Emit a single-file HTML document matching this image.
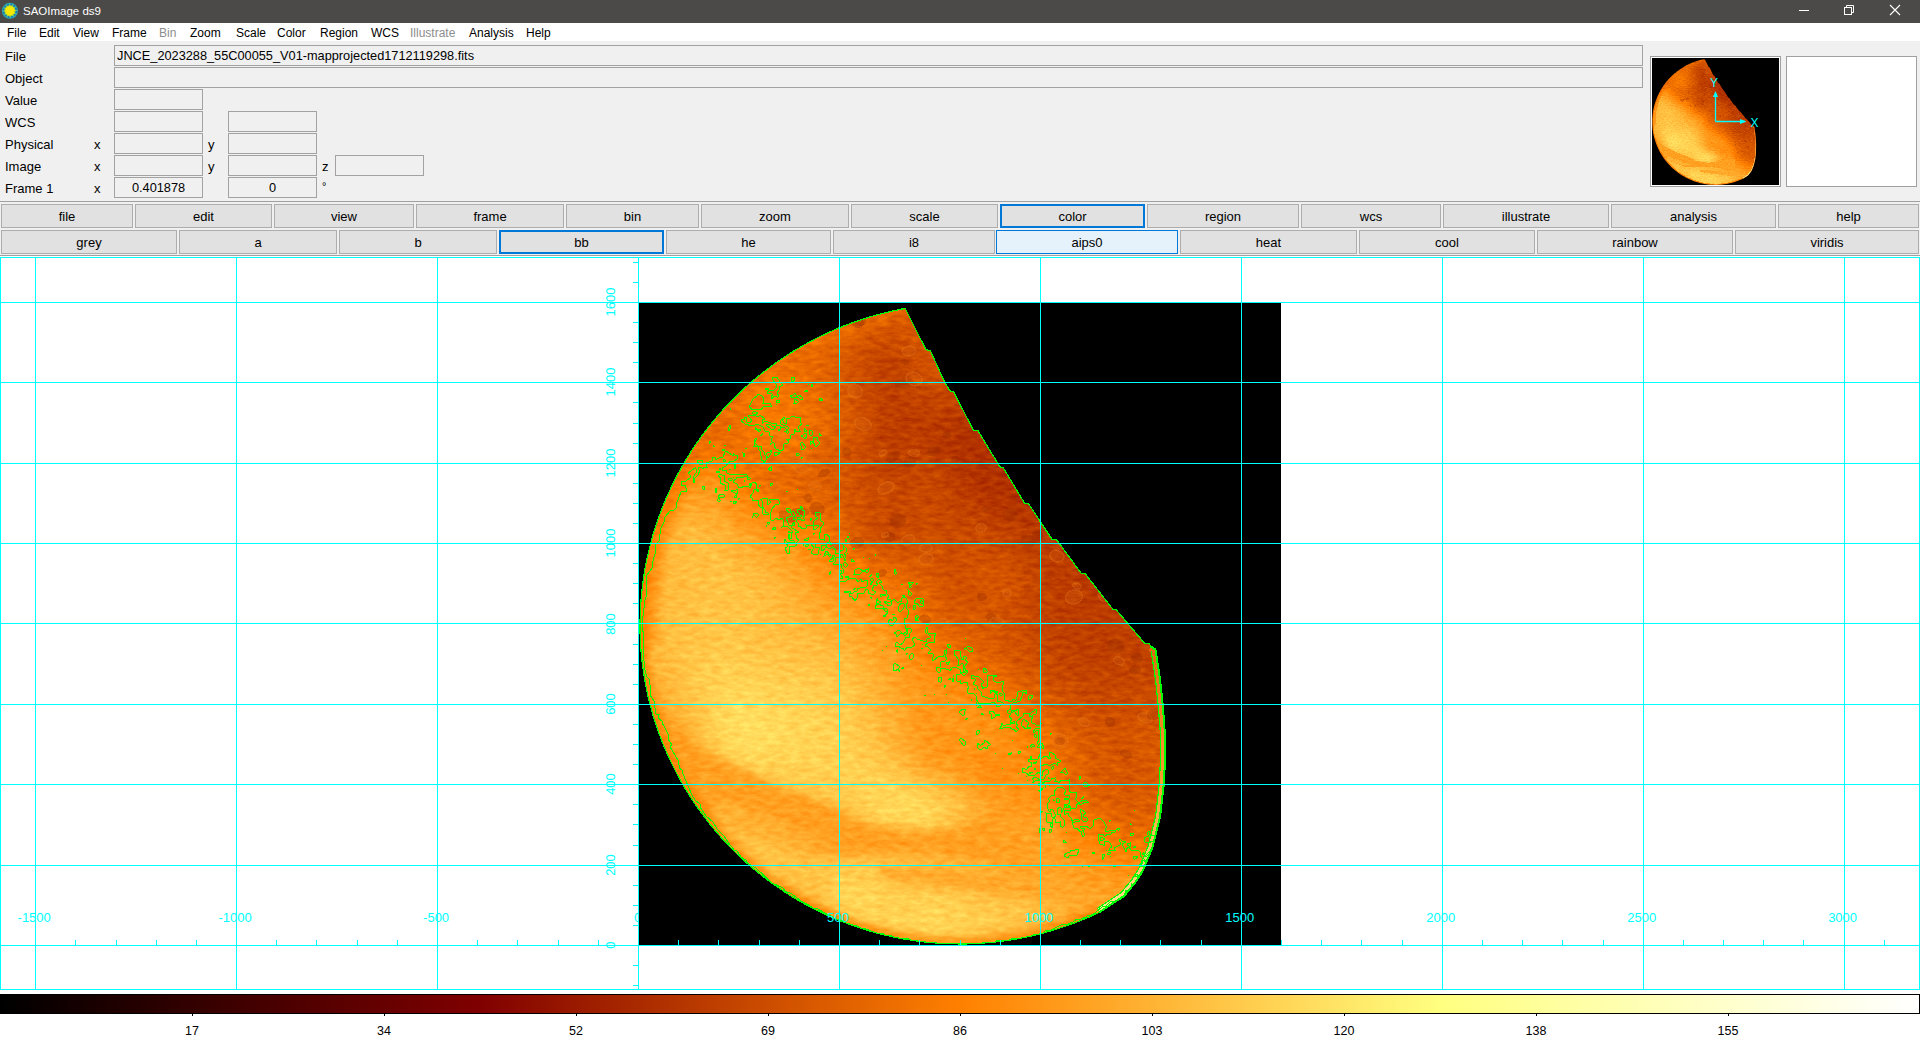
<!DOCTYPE html><html><head><meta charset="utf-8"><style>
*{margin:0;padding:0;box-sizing:border-box}
html,body{width:1920px;height:1040px;overflow:hidden;background:#f0f0f0;font-family:"Liberation Sans",sans-serif;color:#000}
.a{position:absolute;white-space:nowrap}
.mi{position:absolute;top:26px;font-size:12px;line-height:14px}
.lbl{position:absolute;font-size:13px;line-height:16px}
.box{position:absolute;border:1px solid #a2a2a2;background:#f0f0f0;font-size:12.75px;line-height:19px}
.btn{position:absolute;border:1px solid #adadad;background:#e1e1e1;font-size:13px;text-align:center;line-height:22px;padding-top:1px}
.ax{position:absolute;color:#00ffff;font-size:13px;line-height:12px}
.cb{position:absolute;font-size:12.5px;line-height:12px}
</style></head><body>

<div class="a" style="left:0;top:0;width:1920px;height:23px;background:#4b4a48"></div>
<div class="a" style="left:0;top:23px;width:1920px;height:18px;background:#ffffff"></div>
<svg class="a" style="left:0;top:0" width="22" height="22"><circle cx="9.9" cy="10.8" r="8" fill="#30b0b0"/><circle cx="9.9" cy="10.8" r="6.2" fill="#a8d830"/><circle cx="9.9" cy="10.8" r="4.6" fill="#f8e800"/><circle cx="16.1" cy="12.1" r="1.1" fill="#1878c0"/><circle cx="14.6" cy="15.0" r="1.1" fill="#1878c0"/><circle cx="11.9" cy="16.8" r="1.1" fill="#1878c0"/><circle cx="8.6" cy="17.0" r="1.1" fill="#1878c0"/><circle cx="5.7" cy="15.5" r="1.1" fill="#1878c0"/><circle cx="3.9" cy="12.8" r="1.1" fill="#1878c0"/><circle cx="3.7" cy="9.5" r="1.1" fill="#1878c0"/><circle cx="5.2" cy="6.6" r="1.1" fill="#1878c0"/><circle cx="7.9" cy="4.8" r="1.1" fill="#1878c0"/><circle cx="11.2" cy="4.6" r="1.1" fill="#1878c0"/><circle cx="14.1" cy="6.1" r="1.1" fill="#1878c0"/><circle cx="15.9" cy="8.8" r="1.1" fill="#1878c0"/></svg>
<div class="a" style="left:23px;top:4px;font-size:11.5px;line-height:14px;color:#ffffff">SAOImage ds9</div>
<svg class="a" style="left:1790px;top:0" width="130" height="22"><line x1="9" y1="10.5" x2="19" y2="10.5" stroke="#fff" stroke-width="1"/><rect x="54.5" y="7.5" width="7" height="7" fill="none" stroke="#fff" stroke-width="1"/><path d="M56.5 7.5 V5.5 H63.5 V12.5 H61.5" fill="none" stroke="#fff" stroke-width="1"/><path d="M100 5 L110 15 M110 5 L100 15" stroke="#fff" stroke-width="1.1"/></svg>
<div class="mi" style="left:7px;color:#000">File</div>
<div class="mi" style="left:39px;color:#000">Edit</div>
<div class="mi" style="left:73px;color:#000">View</div>
<div class="mi" style="left:112px;color:#000">Frame</div>
<div class="mi" style="left:159px;color:#8d8d8d">Bin</div>
<div class="mi" style="left:190px;color:#000">Zoom</div>
<div class="mi" style="left:236px;color:#000">Scale</div>
<div class="mi" style="left:277px;color:#000">Color</div>
<div class="mi" style="left:320px;color:#000">Region</div>
<div class="mi" style="left:371px;color:#000">WCS</div>
<div class="mi" style="left:410px;color:#8d8d8d">Illustrate</div>
<div class="mi" style="left:469px;color:#000">Analysis</div>
<div class="mi" style="left:526px;color:#000">Help</div>
<div class="lbl" style="left:5px;top:48.5px">File</div>
<div class="lbl" style="left:5px;top:70.5px">Object</div>
<div class="lbl" style="left:5px;top:92.5px">Value</div>
<div class="lbl" style="left:5px;top:114.5px">WCS</div>
<div class="lbl" style="left:5px;top:136.5px">Physical</div>
<div class="lbl" style="left:5px;top:158.5px">Image</div>
<div class="lbl" style="left:5px;top:180.5px">Frame 1</div>
<div class="box" style="left:114px;top:45px;width:1529px;height:21px;padding-left:2px">JNCE_2023288_55C00055_V01-mapprojected1712119298.fits</div>
<div class="box" style="left:114px;top:67px;width:1529px;height:21px"></div>
<div class="box" style="left:114px;top:89px;width:89px;height:21px"></div>
<div class="box" style="left:114px;top:111px;width:89px;height:21px"></div>
<div class="box" style="left:228px;top:111px;width:89px;height:21px"></div>
<div class="box" style="left:114px;top:133px;width:89px;height:21px"></div>
<div class="box" style="left:228px;top:133px;width:89px;height:21px"></div>
<div class="box" style="left:114px;top:155px;width:89px;height:21px"></div>
<div class="box" style="left:228px;top:155px;width:89px;height:21px"></div>
<div class="box" style="left:114px;top:177px;width:89px;height:21px"></div>
<div class="box" style="left:228px;top:177px;width:89px;height:21px"></div>
<div class="box" style="left:335px;top:155px;width:89px;height:21px"></div>
<div class="a" style="left:114px;top:178px;width:89px;font-size:12.75px;line-height:19px;text-align:center">0.401878</div>
<div class="a" style="left:228px;top:178px;width:89px;font-size:12.75px;line-height:19px;text-align:center">0</div>
<div class="lbl" style="left:94px;top:136.5px">x</div>
<div class="lbl" style="left:208px;top:136.5px">y</div>
<div class="lbl" style="left:94px;top:158.5px">x</div>
<div class="lbl" style="left:208px;top:158.5px">y</div>
<div class="lbl" style="left:322px;top:158.5px">z</div>
<div class="lbl" style="left:94px;top:180.5px">x</div>
<div class="lbl" style="left:322px;top:178px;font-size:11px">&#176;</div>
<div class="a" style="left:1650px;top:56px;width:131px;height:131px;border:1px solid #a0a0a0;background:#fff;padding:1px"><div style="width:127px;height:127px;background:#000"></div></div>
<div class="a" style="left:1786px;top:56px;width:131px;height:131px;border:1px solid #a0a0a0;background:#fff"></div>
<div class="a" style="left:0;top:201px;width:1920px;height:1px;background:#a0a0a0"></div>
<div class="a" style="left:0;top:255px;width:1920px;height:1px;background:#a0a0a0"></div>
<div class="btn" style="left:1px;top:204px;width:132px;height:24px;">file</div>
<div class="btn" style="left:135px;top:204px;width:137px;height:24px;">edit</div>
<div class="btn" style="left:274px;top:204px;width:140px;height:24px;">view</div>
<div class="btn" style="left:416px;top:204px;width:148px;height:24px;">frame</div>
<div class="btn" style="left:566px;top:204px;width:133px;height:24px;">bin</div>
<div class="btn" style="left:701px;top:204px;width:148px;height:24px;">zoom</div>
<div class="btn" style="left:851px;top:204px;width:147px;height:24px;">scale</div>
<div class="btn" style="left:1000px;top:204px;width:145px;height:24px;border:2px solid #0078d7;line-height:20px;">color</div>
<div class="btn" style="left:1147px;top:204px;width:152px;height:24px;">region</div>
<div class="btn" style="left:1301px;top:204px;width:140px;height:24px;">wcs</div>
<div class="btn" style="left:1443px;top:204px;width:166px;height:24px;">illustrate</div>
<div class="btn" style="left:1611px;top:204px;width:165px;height:24px;">analysis</div>
<div class="btn" style="left:1778px;top:204px;width:141px;height:24px;">help</div>
<div class="btn" style="left:1px;top:230px;width:176px;height:24px;">grey</div>
<div class="btn" style="left:179px;top:230px;width:158px;height:24px;">a</div>
<div class="btn" style="left:339px;top:230px;width:158px;height:24px;">b</div>
<div class="btn" style="left:499px;top:230px;width:165px;height:24px;border:2px solid #0078d7;line-height:20px;">bb</div>
<div class="btn" style="left:666px;top:230px;width:165px;height:24px;">he</div>
<div class="btn" style="left:833px;top:230px;width:162px;height:24px;">i8</div>
<div class="btn" style="left:996px;top:230px;width:182px;height:24px;border:1px solid #0078d7;background:#e5f1fb;">aips0</div>
<div class="btn" style="left:1180px;top:230px;width:177px;height:24px;">heat</div>
<div class="btn" style="left:1359px;top:230px;width:176px;height:24px;">cool</div>
<div class="btn" style="left:1537px;top:230px;width:196px;height:24px;">rainbow</div>
<div class="btn" style="left:1735px;top:230px;width:184px;height:24px;">viridis</div>
<div class="a" style="left:0;top:256px;width:1920px;height:784px;background:#fff"></div>
<svg class="a" style="left:0;top:0" width="1920" height="1040" shape-rendering="crispEdges">
<rect x="639" y="303" width="642" height="642" fill="#000"/>
<defs>
<clipPath id="pclip"><path d="M1099.6 912.2 L1091.3 916.1 L1082.9 919.7 L1074.4 923.0 L1065.8 926.1 L1057.1 929.0 L1048.4 931.6 L1039.6 934.0 L1030.7 936.1 L1021.7 938.0 L1012.7 939.6 L1003.7 941.0 L994.6 942.1 L985.5 942.9 L976.4 943.5 L967.3 943.9 L958.1 943.9 L949.0 943.7 L939.9 943.3 L930.8 942.6 L921.7 941.6 L912.7 940.4 L903.7 939.0 L894.7 937.2 L885.8 935.3 L876.9 933.0 L868.2 930.6 L859.5 927.8 L850.8 924.9 L842.3 921.6 L833.9 918.2 L825.6 914.5 L817.3 910.6 L809.2 906.4 L801.2 902.0 L793.4 897.4 L785.7 892.6 L778.1 887.5 L770.7 882.3 L763.4 876.8 L756.3 871.1 L749.3 865.2 L742.6 859.2 L736.0 852.9 L729.6 846.5 L723.3 839.8 L717.3 833.0 L711.5 826.1 L705.8 818.9 L700.4 811.6 L695.2 804.2 L690.2 796.6 L685.4 788.9 L680.8 781.0 L676.5 773.0 L672.4 764.9 L668.5 756.7 L664.8 748.4 L661.4 739.9 L658.3 731.4 L655.4 722.8 L652.7 714.1 L650.3 705.3 L648.1 696.5 L646.2 687.6 L644.6 678.7 L643.2 669.7 L642.0 660.7 L641.1 651.6 L640.5 642.5 L640.1 633.5 L640.0 624.4 L640.2 615.3 L640.6 606.2 L641.3 597.1 L642.2 588.0 L643.4 579.0 L644.8 570.0 L646.5 561.0 L648.5 552.1 L650.7 543.3 L653.1 534.5 L655.8 525.8 L658.8 517.2 L662.0 508.7 L665.4 500.2 L669.1 491.9 L673.0 483.6 L677.1 475.5 L681.5 467.5 L686.1 459.6 L690.9 451.8 L696.0 444.2 L701.2 436.8 L706.7 429.4 L712.4 422.3 L718.2 415.3 L724.3 408.4 L730.6 401.8 L737.0 395.3 L743.6 389.0 L750.4 382.9 L757.4 377.0 L764.5 371.3 L771.8 365.8 L779.3 360.5 L786.9 355.4 L794.6 350.5 L802.5 345.9 L810.5 341.4 L818.6 337.2 L826.9 333.3 L835.2 329.5 L843.7 326.0 L852.2 322.8 L860.8 319.8 L869.6 317.0 L878.3 314.5 L887.2 312.2 L896.1 310.2 L905.1 308.4 L905.0 308.0 L926.0 349.8 L930.3 350.5 L944.7 382.3 L950.5 391.6 L953.4 391.6 L973.6 430.6 L977.9 430.6 L1000.0 467.0 L1003.0 467.4 L1024.7 503.5 L1028.3 503.5 L1052.2 539.6 L1056.5 539.6 L1081.5 573.7 L1085.2 573.7 L1113.3 609.8 L1116.2 609.8 L1145.0 643.7 L1149.4 643.7 L1150.8 646.6 L1155.5 649.6 L1160.0 678.8 L1162.8 706.0 L1165.4 740.0 L1165.0 760.0 L1163.8 784.0 L1160.0 817.0 L1152.3 847.7 L1142.7 870.8 L1135.0 883.0 L1124.0 896.0 L1099.6 912.2 Z"/></clipPath>
<filter id="pf" x="600" y="280" width="600" height="700" filterUnits="userSpaceOnUse" color-interpolation-filters="sRGB"><feGaussianBlur in="SourceGraphic" stdDeviation="4" result="base"/><feTurbulence type="fractalNoise" baseFrequency="0.09 0.22" numOctaves="3" seed="7" result="nz"/><feColorMatrix in="nz" type="matrix" values="1 0 0 0 0  1 0 0 0 0  1 0 0 0 0  0 0 0 0 1" result="gn"/><feComposite in="base" in2="gn" operator="arithmetic" k1="0" k2="1" k3="0.10" k4="-0.05" result="sum"/><feComponentTransfer in="sum"><feFuncR type="table" tableValues="0 1 1"/><feFuncG type="table" tableValues="0 0 0.5 1 1"/><feFuncB type="table" tableValues="0 0 1"/><feFuncA type="identity"/></feComponentTransfer></filter>
<linearGradient id="pg0" gradientUnits="userSpaceOnUse" x1="630" y1="0" x2="1190" y2="0"><stop offset="0" stop-color="#767676"/><stop offset="0.0357" stop-color="#767676"/><stop offset="0.0714" stop-color="#777777"/><stop offset="0.107" stop-color="#787878"/><stop offset="0.143" stop-color="#797979"/><stop offset="0.179" stop-color="#7a7a7a"/><stop offset="0.214" stop-color="#7b7b7b"/><stop offset="0.25" stop-color="#7b7b7b"/><stop offset="0.286" stop-color="#7a7a7a"/><stop offset="0.321" stop-color="#7a7a7a"/><stop offset="0.357" stop-color="#787878"/><stop offset="0.393" stop-color="#767676"/><stop offset="0.429" stop-color="#737373"/><stop offset="0.464" stop-color="#707070"/><stop offset="0.5" stop-color="#707070"/><stop offset="0.536" stop-color="#707070"/><stop offset="0.571" stop-color="#707070"/><stop offset="0.607" stop-color="#717171"/><stop offset="0.643" stop-color="#717171"/><stop offset="0.679" stop-color="#717171"/><stop offset="0.714" stop-color="#717171"/><stop offset="0.75" stop-color="#717171"/><stop offset="0.786" stop-color="#717171"/><stop offset="0.821" stop-color="#717171"/><stop offset="0.857" stop-color="#717171"/><stop offset="0.893" stop-color="#717171"/><stop offset="0.929" stop-color="#717171"/><stop offset="0.964" stop-color="#727272"/><stop offset="1" stop-color="#727272"/></linearGradient>
<linearGradient id="pg1" gradientUnits="userSpaceOnUse" x1="630" y1="0" x2="1190" y2="0"><stop offset="0" stop-color="#757575"/><stop offset="0.0357" stop-color="#767676"/><stop offset="0.0714" stop-color="#767676"/><stop offset="0.107" stop-color="#777777"/><stop offset="0.143" stop-color="#787878"/><stop offset="0.179" stop-color="#797979"/><stop offset="0.214" stop-color="#7a7a7a"/><stop offset="0.25" stop-color="#7a7a7a"/><stop offset="0.286" stop-color="#7a7a7a"/><stop offset="0.321" stop-color="#797979"/><stop offset="0.357" stop-color="#787878"/><stop offset="0.393" stop-color="#757575"/><stop offset="0.429" stop-color="#727272"/><stop offset="0.464" stop-color="#6f6f6f"/><stop offset="0.5" stop-color="#6e6e6e"/><stop offset="0.536" stop-color="#6f6f6f"/><stop offset="0.571" stop-color="#6f6f6f"/><stop offset="0.607" stop-color="#707070"/><stop offset="0.643" stop-color="#707070"/><stop offset="0.679" stop-color="#707070"/><stop offset="0.714" stop-color="#707070"/><stop offset="0.75" stop-color="#707070"/><stop offset="0.786" stop-color="#707070"/><stop offset="0.821" stop-color="#707070"/><stop offset="0.857" stop-color="#707070"/><stop offset="0.893" stop-color="#707070"/><stop offset="0.929" stop-color="#717171"/><stop offset="0.964" stop-color="#717171"/><stop offset="1" stop-color="#717171"/></linearGradient>
<linearGradient id="pg2" gradientUnits="userSpaceOnUse" x1="630" y1="0" x2="1190" y2="0"><stop offset="0" stop-color="#757575"/><stop offset="0.0357" stop-color="#757575"/><stop offset="0.0714" stop-color="#757575"/><stop offset="0.107" stop-color="#767676"/><stop offset="0.143" stop-color="#787878"/><stop offset="0.179" stop-color="#797979"/><stop offset="0.214" stop-color="#797979"/><stop offset="0.25" stop-color="#797979"/><stop offset="0.286" stop-color="#797979"/><stop offset="0.321" stop-color="#787878"/><stop offset="0.357" stop-color="#777777"/><stop offset="0.393" stop-color="#747474"/><stop offset="0.429" stop-color="#707070"/><stop offset="0.464" stop-color="#6d6d6d"/><stop offset="0.5" stop-color="#6c6c6c"/><stop offset="0.536" stop-color="#6d6d6d"/><stop offset="0.571" stop-color="#6e6e6e"/><stop offset="0.607" stop-color="#6f6f6f"/><stop offset="0.643" stop-color="#6f6f6f"/><stop offset="0.679" stop-color="#6f6f6f"/><stop offset="0.714" stop-color="#6f6f6f"/><stop offset="0.75" stop-color="#6f6f6f"/><stop offset="0.786" stop-color="#6f6f6f"/><stop offset="0.821" stop-color="#6f6f6f"/><stop offset="0.857" stop-color="#6f6f6f"/><stop offset="0.893" stop-color="#6f6f6f"/><stop offset="0.929" stop-color="#707070"/><stop offset="0.964" stop-color="#707070"/><stop offset="1" stop-color="#707070"/></linearGradient>
<linearGradient id="pg3" gradientUnits="userSpaceOnUse" x1="630" y1="0" x2="1190" y2="0"><stop offset="0" stop-color="#747474"/><stop offset="0.0357" stop-color="#747474"/><stop offset="0.0714" stop-color="#757575"/><stop offset="0.107" stop-color="#767676"/><stop offset="0.143" stop-color="#777777"/><stop offset="0.179" stop-color="#787878"/><stop offset="0.214" stop-color="#797979"/><stop offset="0.25" stop-color="#797979"/><stop offset="0.286" stop-color="#787878"/><stop offset="0.321" stop-color="#777777"/><stop offset="0.357" stop-color="#767676"/><stop offset="0.393" stop-color="#737373"/><stop offset="0.429" stop-color="#6d6d6d"/><stop offset="0.464" stop-color="#6a6a6a"/><stop offset="0.5" stop-color="#6a6a6a"/><stop offset="0.536" stop-color="#6c6c6c"/><stop offset="0.571" stop-color="#6d6d6d"/><stop offset="0.607" stop-color="#6e6e6e"/><stop offset="0.643" stop-color="#6e6e6e"/><stop offset="0.679" stop-color="#6e6e6e"/><stop offset="0.714" stop-color="#6e6e6e"/><stop offset="0.75" stop-color="#6e6e6e"/><stop offset="0.786" stop-color="#6e6e6e"/><stop offset="0.821" stop-color="#6e6e6e"/><stop offset="0.857" stop-color="#6e6e6e"/><stop offset="0.893" stop-color="#6f6f6f"/><stop offset="0.929" stop-color="#6f6f6f"/><stop offset="0.964" stop-color="#6f6f6f"/><stop offset="1" stop-color="#707070"/></linearGradient>
<linearGradient id="pg4" gradientUnits="userSpaceOnUse" x1="630" y1="0" x2="1190" y2="0"><stop offset="0" stop-color="#747474"/><stop offset="0.0357" stop-color="#747474"/><stop offset="0.0714" stop-color="#747474"/><stop offset="0.107" stop-color="#757575"/><stop offset="0.143" stop-color="#767676"/><stop offset="0.179" stop-color="#787878"/><stop offset="0.214" stop-color="#797979"/><stop offset="0.25" stop-color="#787878"/><stop offset="0.286" stop-color="#777777"/><stop offset="0.321" stop-color="#767676"/><stop offset="0.357" stop-color="#747474"/><stop offset="0.393" stop-color="#707070"/><stop offset="0.429" stop-color="#6a6a6a"/><stop offset="0.464" stop-color="#676767"/><stop offset="0.5" stop-color="#686868"/><stop offset="0.536" stop-color="#6b6b6b"/><stop offset="0.571" stop-color="#6c6c6c"/><stop offset="0.607" stop-color="#6d6d6d"/><stop offset="0.643" stop-color="#6d6d6d"/><stop offset="0.679" stop-color="#6d6d6d"/><stop offset="0.714" stop-color="#6d6d6d"/><stop offset="0.75" stop-color="#6d6d6d"/><stop offset="0.786" stop-color="#6d6d6d"/><stop offset="0.821" stop-color="#6d6d6d"/><stop offset="0.857" stop-color="#6d6d6d"/><stop offset="0.893" stop-color="#6e6e6e"/><stop offset="0.929" stop-color="#6e6e6e"/><stop offset="0.964" stop-color="#6e6e6e"/><stop offset="1" stop-color="#6f6f6f"/></linearGradient>
<linearGradient id="pg5" gradientUnits="userSpaceOnUse" x1="630" y1="0" x2="1190" y2="0"><stop offset="0" stop-color="#747474"/><stop offset="0.0357" stop-color="#737373"/><stop offset="0.0714" stop-color="#737373"/><stop offset="0.107" stop-color="#747474"/><stop offset="0.143" stop-color="#767676"/><stop offset="0.179" stop-color="#777777"/><stop offset="0.214" stop-color="#787878"/><stop offset="0.25" stop-color="#787878"/><stop offset="0.286" stop-color="#777777"/><stop offset="0.321" stop-color="#757575"/><stop offset="0.357" stop-color="#737373"/><stop offset="0.393" stop-color="#6d6d6d"/><stop offset="0.429" stop-color="#666666"/><stop offset="0.464" stop-color="#646464"/><stop offset="0.5" stop-color="#666666"/><stop offset="0.536" stop-color="#6a6a6a"/><stop offset="0.571" stop-color="#6b6b6b"/><stop offset="0.607" stop-color="#6b6b6b"/><stop offset="0.643" stop-color="#6b6b6b"/><stop offset="0.679" stop-color="#6b6b6b"/><stop offset="0.714" stop-color="#6b6b6b"/><stop offset="0.75" stop-color="#6b6b6b"/><stop offset="0.786" stop-color="#6b6b6b"/><stop offset="0.821" stop-color="#6c6c6c"/><stop offset="0.857" stop-color="#6c6c6c"/><stop offset="0.893" stop-color="#6d6d6d"/><stop offset="0.929" stop-color="#6d6d6d"/><stop offset="0.964" stop-color="#6e6e6e"/><stop offset="1" stop-color="#6e6e6e"/></linearGradient>
<linearGradient id="pg6" gradientUnits="userSpaceOnUse" x1="630" y1="0" x2="1190" y2="0"><stop offset="0" stop-color="#747474"/><stop offset="0.0357" stop-color="#737373"/><stop offset="0.0714" stop-color="#737373"/><stop offset="0.107" stop-color="#737373"/><stop offset="0.143" stop-color="#757575"/><stop offset="0.179" stop-color="#777777"/><stop offset="0.214" stop-color="#787878"/><stop offset="0.25" stop-color="#787878"/><stop offset="0.286" stop-color="#777777"/><stop offset="0.321" stop-color="#747474"/><stop offset="0.357" stop-color="#717171"/><stop offset="0.393" stop-color="#6b6b6b"/><stop offset="0.429" stop-color="#646464"/><stop offset="0.464" stop-color="#616161"/><stop offset="0.5" stop-color="#656565"/><stop offset="0.536" stop-color="#696969"/><stop offset="0.571" stop-color="#6a6a6a"/><stop offset="0.607" stop-color="#6a6a6a"/><stop offset="0.643" stop-color="#6a6a6a"/><stop offset="0.679" stop-color="#6a6a6a"/><stop offset="0.714" stop-color="#6a6a6a"/><stop offset="0.75" stop-color="#6a6a6a"/><stop offset="0.786" stop-color="#6a6a6a"/><stop offset="0.821" stop-color="#6b6b6b"/><stop offset="0.857" stop-color="#6b6b6b"/><stop offset="0.893" stop-color="#6c6c6c"/><stop offset="0.929" stop-color="#6c6c6c"/><stop offset="0.964" stop-color="#6d6d6d"/><stop offset="1" stop-color="#6d6d6d"/></linearGradient>
<linearGradient id="pg7" gradientUnits="userSpaceOnUse" x1="630" y1="0" x2="1190" y2="0"><stop offset="0" stop-color="#737373"/><stop offset="0.0357" stop-color="#727272"/><stop offset="0.0714" stop-color="#727272"/><stop offset="0.107" stop-color="#737373"/><stop offset="0.143" stop-color="#757575"/><stop offset="0.179" stop-color="#777777"/><stop offset="0.214" stop-color="#797979"/><stop offset="0.25" stop-color="#797979"/><stop offset="0.286" stop-color="#777777"/><stop offset="0.321" stop-color="#747474"/><stop offset="0.357" stop-color="#717171"/><stop offset="0.393" stop-color="#6a6a6a"/><stop offset="0.429" stop-color="#636363"/><stop offset="0.464" stop-color="#606060"/><stop offset="0.5" stop-color="#646464"/><stop offset="0.536" stop-color="#686868"/><stop offset="0.571" stop-color="#686868"/><stop offset="0.607" stop-color="#686868"/><stop offset="0.643" stop-color="#686868"/><stop offset="0.679" stop-color="#686868"/><stop offset="0.714" stop-color="#686868"/><stop offset="0.75" stop-color="#686868"/><stop offset="0.786" stop-color="#696969"/><stop offset="0.821" stop-color="#6a6a6a"/><stop offset="0.857" stop-color="#6a6a6a"/><stop offset="0.893" stop-color="#6b6b6b"/><stop offset="0.929" stop-color="#6c6c6c"/><stop offset="0.964" stop-color="#6c6c6c"/><stop offset="1" stop-color="#6d6d6d"/></linearGradient>
<linearGradient id="pg8" gradientUnits="userSpaceOnUse" x1="630" y1="0" x2="1190" y2="0"><stop offset="0" stop-color="#747474"/><stop offset="0.0357" stop-color="#727272"/><stop offset="0.0714" stop-color="#717171"/><stop offset="0.107" stop-color="#727272"/><stop offset="0.143" stop-color="#747474"/><stop offset="0.179" stop-color="#777777"/><stop offset="0.214" stop-color="#797979"/><stop offset="0.25" stop-color="#7a7a7a"/><stop offset="0.286" stop-color="#787878"/><stop offset="0.321" stop-color="#757575"/><stop offset="0.357" stop-color="#717171"/><stop offset="0.393" stop-color="#6a6a6a"/><stop offset="0.429" stop-color="#636363"/><stop offset="0.464" stop-color="#606060"/><stop offset="0.5" stop-color="#636363"/><stop offset="0.536" stop-color="#676767"/><stop offset="0.571" stop-color="#676767"/><stop offset="0.607" stop-color="#666666"/><stop offset="0.643" stop-color="#666666"/><stop offset="0.679" stop-color="#666666"/><stop offset="0.714" stop-color="#666666"/><stop offset="0.75" stop-color="#676767"/><stop offset="0.786" stop-color="#686868"/><stop offset="0.821" stop-color="#686868"/><stop offset="0.857" stop-color="#696969"/><stop offset="0.893" stop-color="#6a6a6a"/><stop offset="0.929" stop-color="#6b6b6b"/><stop offset="0.964" stop-color="#6b6b6b"/><stop offset="1" stop-color="#6c6c6c"/></linearGradient>
<linearGradient id="pg9" gradientUnits="userSpaceOnUse" x1="630" y1="0" x2="1190" y2="0"><stop offset="0" stop-color="#747474"/><stop offset="0.0357" stop-color="#727272"/><stop offset="0.0714" stop-color="#717171"/><stop offset="0.107" stop-color="#717171"/><stop offset="0.143" stop-color="#737373"/><stop offset="0.179" stop-color="#777777"/><stop offset="0.214" stop-color="#7a7a7a"/><stop offset="0.25" stop-color="#7b7b7b"/><stop offset="0.286" stop-color="#797979"/><stop offset="0.321" stop-color="#767676"/><stop offset="0.357" stop-color="#717171"/><stop offset="0.393" stop-color="#6a6a6a"/><stop offset="0.429" stop-color="#636363"/><stop offset="0.464" stop-color="#5f5f5f"/><stop offset="0.5" stop-color="#626262"/><stop offset="0.536" stop-color="#646464"/><stop offset="0.571" stop-color="#646464"/><stop offset="0.607" stop-color="#646464"/><stop offset="0.643" stop-color="#646464"/><stop offset="0.679" stop-color="#646464"/><stop offset="0.714" stop-color="#646464"/><stop offset="0.75" stop-color="#656565"/><stop offset="0.786" stop-color="#666666"/><stop offset="0.821" stop-color="#676767"/><stop offset="0.857" stop-color="#686868"/><stop offset="0.893" stop-color="#696969"/><stop offset="0.929" stop-color="#6a6a6a"/><stop offset="0.964" stop-color="#6a6a6a"/><stop offset="1" stop-color="#6b6b6b"/></linearGradient>
<linearGradient id="pg10" gradientUnits="userSpaceOnUse" x1="630" y1="0" x2="1190" y2="0"><stop offset="0" stop-color="#757575"/><stop offset="0.0357" stop-color="#727272"/><stop offset="0.0714" stop-color="#717171"/><stop offset="0.107" stop-color="#717171"/><stop offset="0.143" stop-color="#737373"/><stop offset="0.179" stop-color="#777777"/><stop offset="0.214" stop-color="#7a7a7a"/><stop offset="0.25" stop-color="#7c7c7c"/><stop offset="0.286" stop-color="#7a7a7a"/><stop offset="0.321" stop-color="#777777"/><stop offset="0.357" stop-color="#727272"/><stop offset="0.393" stop-color="#6b6b6b"/><stop offset="0.429" stop-color="#646464"/><stop offset="0.464" stop-color="#5f5f5f"/><stop offset="0.5" stop-color="#606060"/><stop offset="0.536" stop-color="#626262"/><stop offset="0.571" stop-color="#626262"/><stop offset="0.607" stop-color="#616161"/><stop offset="0.643" stop-color="#616161"/><stop offset="0.679" stop-color="#626262"/><stop offset="0.714" stop-color="#626262"/><stop offset="0.75" stop-color="#646464"/><stop offset="0.786" stop-color="#656565"/><stop offset="0.821" stop-color="#666666"/><stop offset="0.857" stop-color="#676767"/><stop offset="0.893" stop-color="#686868"/><stop offset="0.929" stop-color="#696969"/><stop offset="0.964" stop-color="#6a6a6a"/><stop offset="1" stop-color="#6a6a6a"/></linearGradient>
<linearGradient id="pg11" gradientUnits="userSpaceOnUse" x1="630" y1="0" x2="1190" y2="0"><stop offset="0" stop-color="#767676"/><stop offset="0.0357" stop-color="#737373"/><stop offset="0.0714" stop-color="#717171"/><stop offset="0.107" stop-color="#717171"/><stop offset="0.143" stop-color="#737373"/><stop offset="0.179" stop-color="#767676"/><stop offset="0.214" stop-color="#7b7b7b"/><stop offset="0.25" stop-color="#7d7d7d"/><stop offset="0.286" stop-color="#7b7b7b"/><stop offset="0.321" stop-color="#787878"/><stop offset="0.357" stop-color="#727272"/><stop offset="0.393" stop-color="#6c6c6c"/><stop offset="0.429" stop-color="#646464"/><stop offset="0.464" stop-color="#5f5f5f"/><stop offset="0.5" stop-color="#5e5e5e"/><stop offset="0.536" stop-color="#606060"/><stop offset="0.571" stop-color="#5f5f5f"/><stop offset="0.607" stop-color="#5e5e5e"/><stop offset="0.643" stop-color="#5f5f5f"/><stop offset="0.679" stop-color="#5f5f5f"/><stop offset="0.714" stop-color="#616161"/><stop offset="0.75" stop-color="#626262"/><stop offset="0.786" stop-color="#646464"/><stop offset="0.821" stop-color="#656565"/><stop offset="0.857" stop-color="#666666"/><stop offset="0.893" stop-color="#676767"/><stop offset="0.929" stop-color="#686868"/><stop offset="0.964" stop-color="#696969"/><stop offset="1" stop-color="#6a6a6a"/></linearGradient>
<linearGradient id="pg12" gradientUnits="userSpaceOnUse" x1="630" y1="0" x2="1190" y2="0"><stop offset="0" stop-color="#777777"/><stop offset="0.0357" stop-color="#747474"/><stop offset="0.0714" stop-color="#727272"/><stop offset="0.107" stop-color="#717171"/><stop offset="0.143" stop-color="#737373"/><stop offset="0.179" stop-color="#767676"/><stop offset="0.214" stop-color="#7a7a7a"/><stop offset="0.25" stop-color="#7d7d7d"/><stop offset="0.286" stop-color="#7c7c7c"/><stop offset="0.321" stop-color="#787878"/><stop offset="0.357" stop-color="#737373"/><stop offset="0.393" stop-color="#6c6c6c"/><stop offset="0.429" stop-color="#646464"/><stop offset="0.464" stop-color="#5f5f5f"/><stop offset="0.5" stop-color="#5e5e5e"/><stop offset="0.536" stop-color="#5e5e5e"/><stop offset="0.571" stop-color="#5d5d5d"/><stop offset="0.607" stop-color="#5c5c5c"/><stop offset="0.643" stop-color="#5c5c5c"/><stop offset="0.679" stop-color="#5d5d5d"/><stop offset="0.714" stop-color="#5f5f5f"/><stop offset="0.75" stop-color="#606060"/><stop offset="0.786" stop-color="#626262"/><stop offset="0.821" stop-color="#646464"/><stop offset="0.857" stop-color="#666666"/><stop offset="0.893" stop-color="#676767"/><stop offset="0.929" stop-color="#686868"/><stop offset="0.964" stop-color="#686868"/><stop offset="1" stop-color="#696969"/></linearGradient>
<linearGradient id="pg13" gradientUnits="userSpaceOnUse" x1="630" y1="0" x2="1190" y2="0"><stop offset="0" stop-color="#797979"/><stop offset="0.0357" stop-color="#767676"/><stop offset="0.0714" stop-color="#737373"/><stop offset="0.107" stop-color="#727272"/><stop offset="0.143" stop-color="#737373"/><stop offset="0.179" stop-color="#767676"/><stop offset="0.214" stop-color="#7a7a7a"/><stop offset="0.25" stop-color="#7e7e7e"/><stop offset="0.286" stop-color="#7c7c7c"/><stop offset="0.321" stop-color="#777777"/><stop offset="0.357" stop-color="#727272"/><stop offset="0.393" stop-color="#6c6c6c"/><stop offset="0.429" stop-color="#646464"/><stop offset="0.464" stop-color="#5f5f5f"/><stop offset="0.5" stop-color="#5e5e5e"/><stop offset="0.536" stop-color="#5d5d5d"/><stop offset="0.571" stop-color="#5b5b5b"/><stop offset="0.607" stop-color="#5a5a5a"/><stop offset="0.643" stop-color="#5a5a5a"/><stop offset="0.679" stop-color="#5b5b5b"/><stop offset="0.714" stop-color="#5d5d5d"/><stop offset="0.75" stop-color="#5f5f5f"/><stop offset="0.786" stop-color="#616161"/><stop offset="0.821" stop-color="#636363"/><stop offset="0.857" stop-color="#656565"/><stop offset="0.893" stop-color="#666666"/><stop offset="0.929" stop-color="#676767"/><stop offset="0.964" stop-color="#686868"/><stop offset="1" stop-color="#686868"/></linearGradient>
<linearGradient id="pg14" gradientUnits="userSpaceOnUse" x1="630" y1="0" x2="1190" y2="0"><stop offset="0" stop-color="#7b7b7b"/><stop offset="0.0357" stop-color="#787878"/><stop offset="0.0714" stop-color="#757575"/><stop offset="0.107" stop-color="#757575"/><stop offset="0.143" stop-color="#757575"/><stop offset="0.179" stop-color="#767676"/><stop offset="0.214" stop-color="#7a7a7a"/><stop offset="0.25" stop-color="#7d7d7d"/><stop offset="0.286" stop-color="#7b7b7b"/><stop offset="0.321" stop-color="#767676"/><stop offset="0.357" stop-color="#717171"/><stop offset="0.393" stop-color="#6b6b6b"/><stop offset="0.429" stop-color="#646464"/><stop offset="0.464" stop-color="#5f5f5f"/><stop offset="0.5" stop-color="#5f5f5f"/><stop offset="0.536" stop-color="#5e5e5e"/><stop offset="0.571" stop-color="#5b5b5b"/><stop offset="0.607" stop-color="#595959"/><stop offset="0.643" stop-color="#595959"/><stop offset="0.679" stop-color="#5a5a5a"/><stop offset="0.714" stop-color="#5c5c5c"/><stop offset="0.75" stop-color="#5e5e5e"/><stop offset="0.786" stop-color="#606060"/><stop offset="0.821" stop-color="#626262"/><stop offset="0.857" stop-color="#646464"/><stop offset="0.893" stop-color="#656565"/><stop offset="0.929" stop-color="#666666"/><stop offset="0.964" stop-color="#676767"/><stop offset="1" stop-color="#676767"/></linearGradient>
<linearGradient id="pg15" gradientUnits="userSpaceOnUse" x1="630" y1="0" x2="1190" y2="0"><stop offset="0" stop-color="#7e7e7e"/><stop offset="0.0357" stop-color="#7b7b7b"/><stop offset="0.0714" stop-color="#797979"/><stop offset="0.107" stop-color="#797979"/><stop offset="0.143" stop-color="#797979"/><stop offset="0.179" stop-color="#787878"/><stop offset="0.214" stop-color="#797979"/><stop offset="0.25" stop-color="#7a7a7a"/><stop offset="0.286" stop-color="#797979"/><stop offset="0.321" stop-color="#757575"/><stop offset="0.357" stop-color="#707070"/><stop offset="0.393" stop-color="#6a6a6a"/><stop offset="0.429" stop-color="#646464"/><stop offset="0.464" stop-color="#606060"/><stop offset="0.5" stop-color="#606060"/><stop offset="0.536" stop-color="#5f5f5f"/><stop offset="0.571" stop-color="#5b5b5b"/><stop offset="0.607" stop-color="#585858"/><stop offset="0.643" stop-color="#585858"/><stop offset="0.679" stop-color="#595959"/><stop offset="0.714" stop-color="#5b5b5b"/><stop offset="0.75" stop-color="#5d5d5d"/><stop offset="0.786" stop-color="#5f5f5f"/><stop offset="0.821" stop-color="#626262"/><stop offset="0.857" stop-color="#646464"/><stop offset="0.893" stop-color="#656565"/><stop offset="0.929" stop-color="#666666"/><stop offset="0.964" stop-color="#666666"/><stop offset="1" stop-color="#676767"/></linearGradient>
<linearGradient id="pg16" gradientUnits="userSpaceOnUse" x1="630" y1="0" x2="1190" y2="0"><stop offset="0" stop-color="#818181"/><stop offset="0.0357" stop-color="#7f7f7f"/><stop offset="0.0714" stop-color="#7e7e7e"/><stop offset="0.107" stop-color="#7e7e7e"/><stop offset="0.143" stop-color="#7f7f7f"/><stop offset="0.179" stop-color="#7b7b7b"/><stop offset="0.214" stop-color="#787878"/><stop offset="0.25" stop-color="#777777"/><stop offset="0.286" stop-color="#767676"/><stop offset="0.321" stop-color="#737373"/><stop offset="0.357" stop-color="#6f6f6f"/><stop offset="0.393" stop-color="#6a6a6a"/><stop offset="0.429" stop-color="#646464"/><stop offset="0.464" stop-color="#606060"/><stop offset="0.5" stop-color="#616161"/><stop offset="0.536" stop-color="#616161"/><stop offset="0.571" stop-color="#5d5d5d"/><stop offset="0.607" stop-color="#595959"/><stop offset="0.643" stop-color="#585858"/><stop offset="0.679" stop-color="#585858"/><stop offset="0.714" stop-color="#5a5a5a"/><stop offset="0.75" stop-color="#5c5c5c"/><stop offset="0.786" stop-color="#5f5f5f"/><stop offset="0.821" stop-color="#616161"/><stop offset="0.857" stop-color="#636363"/><stop offset="0.893" stop-color="#646464"/><stop offset="0.929" stop-color="#656565"/><stop offset="0.964" stop-color="#666666"/><stop offset="1" stop-color="#666666"/></linearGradient>
<linearGradient id="pg17" gradientUnits="userSpaceOnUse" x1="630" y1="0" x2="1190" y2="0"><stop offset="0" stop-color="#858585"/><stop offset="0.0357" stop-color="#838383"/><stop offset="0.0714" stop-color="#838383"/><stop offset="0.107" stop-color="#848484"/><stop offset="0.143" stop-color="#848484"/><stop offset="0.179" stop-color="#7f7f7f"/><stop offset="0.214" stop-color="#797979"/><stop offset="0.25" stop-color="#757575"/><stop offset="0.286" stop-color="#747474"/><stop offset="0.321" stop-color="#727272"/><stop offset="0.357" stop-color="#6e6e6e"/><stop offset="0.393" stop-color="#6a6a6a"/><stop offset="0.429" stop-color="#646464"/><stop offset="0.464" stop-color="#606060"/><stop offset="0.5" stop-color="#626262"/><stop offset="0.536" stop-color="#626262"/><stop offset="0.571" stop-color="#5e5e5e"/><stop offset="0.607" stop-color="#5a5a5a"/><stop offset="0.643" stop-color="#585858"/><stop offset="0.679" stop-color="#585858"/><stop offset="0.714" stop-color="#595959"/><stop offset="0.75" stop-color="#5b5b5b"/><stop offset="0.786" stop-color="#5e5e5e"/><stop offset="0.821" stop-color="#616161"/><stop offset="0.857" stop-color="#636363"/><stop offset="0.893" stop-color="#646464"/><stop offset="0.929" stop-color="#646464"/><stop offset="0.964" stop-color="#656565"/><stop offset="1" stop-color="#656565"/></linearGradient>
<linearGradient id="pg18" gradientUnits="userSpaceOnUse" x1="630" y1="0" x2="1190" y2="0"><stop offset="0" stop-color="#888888"/><stop offset="0.0357" stop-color="#888888"/><stop offset="0.0714" stop-color="#888888"/><stop offset="0.107" stop-color="#898989"/><stop offset="0.143" stop-color="#898989"/><stop offset="0.179" stop-color="#838383"/><stop offset="0.214" stop-color="#7b7b7b"/><stop offset="0.25" stop-color="#767676"/><stop offset="0.286" stop-color="#747474"/><stop offset="0.321" stop-color="#717171"/><stop offset="0.357" stop-color="#6e6e6e"/><stop offset="0.393" stop-color="#6a6a6a"/><stop offset="0.429" stop-color="#656565"/><stop offset="0.464" stop-color="#616161"/><stop offset="0.5" stop-color="#636363"/><stop offset="0.536" stop-color="#636363"/><stop offset="0.571" stop-color="#5f5f5f"/><stop offset="0.607" stop-color="#5b5b5b"/><stop offset="0.643" stop-color="#585858"/><stop offset="0.679" stop-color="#585858"/><stop offset="0.714" stop-color="#595959"/><stop offset="0.75" stop-color="#5b5b5b"/><stop offset="0.786" stop-color="#5e5e5e"/><stop offset="0.821" stop-color="#606060"/><stop offset="0.857" stop-color="#626262"/><stop offset="0.893" stop-color="#636363"/><stop offset="0.929" stop-color="#646464"/><stop offset="0.964" stop-color="#646464"/><stop offset="1" stop-color="#656565"/></linearGradient>
<linearGradient id="pg19" gradientUnits="userSpaceOnUse" x1="630" y1="0" x2="1190" y2="0"><stop offset="0" stop-color="#8b8b8b"/><stop offset="0.0357" stop-color="#8c8c8c"/><stop offset="0.0714" stop-color="#8d8d8d"/><stop offset="0.107" stop-color="#8e8e8e"/><stop offset="0.143" stop-color="#8c8c8c"/><stop offset="0.179" stop-color="#878787"/><stop offset="0.214" stop-color="#7f7f7f"/><stop offset="0.25" stop-color="#787878"/><stop offset="0.286" stop-color="#747474"/><stop offset="0.321" stop-color="#727272"/><stop offset="0.357" stop-color="#6f6f6f"/><stop offset="0.393" stop-color="#6a6a6a"/><stop offset="0.429" stop-color="#666666"/><stop offset="0.464" stop-color="#636363"/><stop offset="0.5" stop-color="#646464"/><stop offset="0.536" stop-color="#646464"/><stop offset="0.571" stop-color="#616161"/><stop offset="0.607" stop-color="#5c5c5c"/><stop offset="0.643" stop-color="#595959"/><stop offset="0.679" stop-color="#595959"/><stop offset="0.714" stop-color="#595959"/><stop offset="0.75" stop-color="#5b5b5b"/><stop offset="0.786" stop-color="#5d5d5d"/><stop offset="0.821" stop-color="#606060"/><stop offset="0.857" stop-color="#626262"/><stop offset="0.893" stop-color="#636363"/><stop offset="0.929" stop-color="#636363"/><stop offset="0.964" stop-color="#636363"/><stop offset="1" stop-color="#646464"/></linearGradient>
<linearGradient id="pg20" gradientUnits="userSpaceOnUse" x1="630" y1="0" x2="1190" y2="0"><stop offset="0" stop-color="#8e8e8e"/><stop offset="0.0357" stop-color="#8f8f8f"/><stop offset="0.0714" stop-color="#919191"/><stop offset="0.107" stop-color="#929292"/><stop offset="0.143" stop-color="#909090"/><stop offset="0.179" stop-color="#8a8a8a"/><stop offset="0.214" stop-color="#838383"/><stop offset="0.25" stop-color="#7c7c7c"/><stop offset="0.286" stop-color="#777777"/><stop offset="0.321" stop-color="#747474"/><stop offset="0.357" stop-color="#707070"/><stop offset="0.393" stop-color="#6b6b6b"/><stop offset="0.429" stop-color="#676767"/><stop offset="0.464" stop-color="#646464"/><stop offset="0.5" stop-color="#646464"/><stop offset="0.536" stop-color="#646464"/><stop offset="0.571" stop-color="#626262"/><stop offset="0.607" stop-color="#5e5e5e"/><stop offset="0.643" stop-color="#5b5b5b"/><stop offset="0.679" stop-color="#5a5a5a"/><stop offset="0.714" stop-color="#5a5a5a"/><stop offset="0.75" stop-color="#5b5b5b"/><stop offset="0.786" stop-color="#5d5d5d"/><stop offset="0.821" stop-color="#606060"/><stop offset="0.857" stop-color="#626262"/><stop offset="0.893" stop-color="#626262"/><stop offset="0.929" stop-color="#626262"/><stop offset="0.964" stop-color="#636363"/><stop offset="1" stop-color="#636363"/></linearGradient>
<linearGradient id="pg21" gradientUnits="userSpaceOnUse" x1="630" y1="0" x2="1190" y2="0"><stop offset="0" stop-color="#919191"/><stop offset="0.0357" stop-color="#939393"/><stop offset="0.0714" stop-color="#959595"/><stop offset="0.107" stop-color="#969696"/><stop offset="0.143" stop-color="#949494"/><stop offset="0.179" stop-color="#8e8e8e"/><stop offset="0.214" stop-color="#868686"/><stop offset="0.25" stop-color="#808080"/><stop offset="0.286" stop-color="#7b7b7b"/><stop offset="0.321" stop-color="#767676"/><stop offset="0.357" stop-color="#727272"/><stop offset="0.393" stop-color="#6c6c6c"/><stop offset="0.429" stop-color="#676767"/><stop offset="0.464" stop-color="#646464"/><stop offset="0.5" stop-color="#656565"/><stop offset="0.536" stop-color="#656565"/><stop offset="0.571" stop-color="#636363"/><stop offset="0.607" stop-color="#606060"/><stop offset="0.643" stop-color="#5d5d5d"/><stop offset="0.679" stop-color="#5b5b5b"/><stop offset="0.714" stop-color="#5a5a5a"/><stop offset="0.75" stop-color="#5b5b5b"/><stop offset="0.786" stop-color="#5d5d5d"/><stop offset="0.821" stop-color="#5f5f5f"/><stop offset="0.857" stop-color="#616161"/><stop offset="0.893" stop-color="#616161"/><stop offset="0.929" stop-color="#626262"/><stop offset="0.964" stop-color="#626262"/><stop offset="1" stop-color="#626262"/></linearGradient>
<linearGradient id="pg22" gradientUnits="userSpaceOnUse" x1="630" y1="0" x2="1190" y2="0"><stop offset="0" stop-color="#939393"/><stop offset="0.0357" stop-color="#959595"/><stop offset="0.0714" stop-color="#989898"/><stop offset="0.107" stop-color="#999999"/><stop offset="0.143" stop-color="#979797"/><stop offset="0.179" stop-color="#919191"/><stop offset="0.214" stop-color="#8a8a8a"/><stop offset="0.25" stop-color="#848484"/><stop offset="0.286" stop-color="#7f7f7f"/><stop offset="0.321" stop-color="#7a7a7a"/><stop offset="0.357" stop-color="#757575"/><stop offset="0.393" stop-color="#6e6e6e"/><stop offset="0.429" stop-color="#666666"/><stop offset="0.464" stop-color="#636363"/><stop offset="0.5" stop-color="#656565"/><stop offset="0.536" stop-color="#666666"/><stop offset="0.571" stop-color="#646464"/><stop offset="0.607" stop-color="#626262"/><stop offset="0.643" stop-color="#606060"/><stop offset="0.679" stop-color="#5d5d5d"/><stop offset="0.714" stop-color="#5c5c5c"/><stop offset="0.75" stop-color="#5b5b5b"/><stop offset="0.786" stop-color="#5d5d5d"/><stop offset="0.821" stop-color="#5e5e5e"/><stop offset="0.857" stop-color="#606060"/><stop offset="0.893" stop-color="#616161"/><stop offset="0.929" stop-color="#616161"/><stop offset="0.964" stop-color="#616161"/><stop offset="1" stop-color="#626262"/></linearGradient>
<linearGradient id="pg23" gradientUnits="userSpaceOnUse" x1="630" y1="0" x2="1190" y2="0"><stop offset="0" stop-color="#959595"/><stop offset="0.0357" stop-color="#989898"/><stop offset="0.0714" stop-color="#9a9a9a"/><stop offset="0.107" stop-color="#9c9c9c"/><stop offset="0.143" stop-color="#9a9a9a"/><stop offset="0.179" stop-color="#959595"/><stop offset="0.214" stop-color="#8f8f8f"/><stop offset="0.25" stop-color="#898989"/><stop offset="0.286" stop-color="#848484"/><stop offset="0.321" stop-color="#7f7f7f"/><stop offset="0.357" stop-color="#787878"/><stop offset="0.393" stop-color="#707070"/><stop offset="0.429" stop-color="#676767"/><stop offset="0.464" stop-color="#636363"/><stop offset="0.5" stop-color="#666666"/><stop offset="0.536" stop-color="#666666"/><stop offset="0.571" stop-color="#656565"/><stop offset="0.607" stop-color="#646464"/><stop offset="0.643" stop-color="#626262"/><stop offset="0.679" stop-color="#606060"/><stop offset="0.714" stop-color="#5d5d5d"/><stop offset="0.75" stop-color="#5c5c5c"/><stop offset="0.786" stop-color="#5c5c5c"/><stop offset="0.821" stop-color="#5e5e5e"/><stop offset="0.857" stop-color="#5f5f5f"/><stop offset="0.893" stop-color="#606060"/><stop offset="0.929" stop-color="#606060"/><stop offset="0.964" stop-color="#606060"/><stop offset="1" stop-color="#616161"/></linearGradient>
<linearGradient id="pg24" gradientUnits="userSpaceOnUse" x1="630" y1="0" x2="1190" y2="0"><stop offset="0" stop-color="#979797"/><stop offset="0.0357" stop-color="#999999"/><stop offset="0.0714" stop-color="#9c9c9c"/><stop offset="0.107" stop-color="#9e9e9e"/><stop offset="0.143" stop-color="#9d9d9d"/><stop offset="0.179" stop-color="#999999"/><stop offset="0.214" stop-color="#939393"/><stop offset="0.25" stop-color="#8d8d8d"/><stop offset="0.286" stop-color="#888888"/><stop offset="0.321" stop-color="#838383"/><stop offset="0.357" stop-color="#7c7c7c"/><stop offset="0.393" stop-color="#747474"/><stop offset="0.429" stop-color="#6a6a6a"/><stop offset="0.464" stop-color="#666666"/><stop offset="0.5" stop-color="#676767"/><stop offset="0.536" stop-color="#676767"/><stop offset="0.571" stop-color="#666666"/><stop offset="0.607" stop-color="#656565"/><stop offset="0.643" stop-color="#646464"/><stop offset="0.679" stop-color="#626262"/><stop offset="0.714" stop-color="#5e5e5e"/><stop offset="0.75" stop-color="#5c5c5c"/><stop offset="0.786" stop-color="#5c5c5c"/><stop offset="0.821" stop-color="#5d5d5d"/><stop offset="0.857" stop-color="#5e5e5e"/><stop offset="0.893" stop-color="#5f5f5f"/><stop offset="0.929" stop-color="#5f5f5f"/><stop offset="0.964" stop-color="#606060"/><stop offset="1" stop-color="#606060"/></linearGradient>
<linearGradient id="pg25" gradientUnits="userSpaceOnUse" x1="630" y1="0" x2="1190" y2="0"><stop offset="0" stop-color="#989898"/><stop offset="0.0357" stop-color="#9a9a9a"/><stop offset="0.0714" stop-color="#9d9d9d"/><stop offset="0.107" stop-color="#9f9f9f"/><stop offset="0.143" stop-color="#9f9f9f"/><stop offset="0.179" stop-color="#9b9b9b"/><stop offset="0.214" stop-color="#979797"/><stop offset="0.25" stop-color="#929292"/><stop offset="0.286" stop-color="#8d8d8d"/><stop offset="0.321" stop-color="#868686"/><stop offset="0.357" stop-color="#7f7f7f"/><stop offset="0.393" stop-color="#787878"/><stop offset="0.429" stop-color="#6f6f6f"/><stop offset="0.464" stop-color="#6a6a6a"/><stop offset="0.5" stop-color="#696969"/><stop offset="0.536" stop-color="#686868"/><stop offset="0.571" stop-color="#676767"/><stop offset="0.607" stop-color="#676767"/><stop offset="0.643" stop-color="#666666"/><stop offset="0.679" stop-color="#646464"/><stop offset="0.714" stop-color="#606060"/><stop offset="0.75" stop-color="#5d5d5d"/><stop offset="0.786" stop-color="#5c5c5c"/><stop offset="0.821" stop-color="#5d5d5d"/><stop offset="0.857" stop-color="#5e5e5e"/><stop offset="0.893" stop-color="#5e5e5e"/><stop offset="0.929" stop-color="#5f5f5f"/><stop offset="0.964" stop-color="#5f5f5f"/><stop offset="1" stop-color="#5f5f5f"/></linearGradient>
<linearGradient id="pg26" gradientUnits="userSpaceOnUse" x1="630" y1="0" x2="1190" y2="0"><stop offset="0" stop-color="#999999"/><stop offset="0.0357" stop-color="#9b9b9b"/><stop offset="0.0714" stop-color="#9d9d9d"/><stop offset="0.107" stop-color="#9f9f9f"/><stop offset="0.143" stop-color="#a0a0a0"/><stop offset="0.179" stop-color="#9e9e9e"/><stop offset="0.214" stop-color="#9a9a9a"/><stop offset="0.25" stop-color="#969696"/><stop offset="0.286" stop-color="#909090"/><stop offset="0.321" stop-color="#8a8a8a"/><stop offset="0.357" stop-color="#838383"/><stop offset="0.393" stop-color="#7b7b7b"/><stop offset="0.429" stop-color="#747474"/><stop offset="0.464" stop-color="#6f6f6f"/><stop offset="0.5" stop-color="#6c6c6c"/><stop offset="0.536" stop-color="#6a6a6a"/><stop offset="0.571" stop-color="#686868"/><stop offset="0.607" stop-color="#686868"/><stop offset="0.643" stop-color="#686868"/><stop offset="0.679" stop-color="#666666"/><stop offset="0.714" stop-color="#626262"/><stop offset="0.75" stop-color="#5e5e5e"/><stop offset="0.786" stop-color="#5d5d5d"/><stop offset="0.821" stop-color="#5d5d5d"/><stop offset="0.857" stop-color="#5d5d5d"/><stop offset="0.893" stop-color="#5e5e5e"/><stop offset="0.929" stop-color="#5e5e5e"/><stop offset="0.964" stop-color="#5e5e5e"/><stop offset="1" stop-color="#5f5f5f"/></linearGradient>
<linearGradient id="pg27" gradientUnits="userSpaceOnUse" x1="630" y1="0" x2="1190" y2="0"><stop offset="0" stop-color="#9a9a9a"/><stop offset="0.0357" stop-color="#9c9c9c"/><stop offset="0.0714" stop-color="#9d9d9d"/><stop offset="0.107" stop-color="#9f9f9f"/><stop offset="0.143" stop-color="#a0a0a0"/><stop offset="0.179" stop-color="#a0a0a0"/><stop offset="0.214" stop-color="#9d9d9d"/><stop offset="0.25" stop-color="#999999"/><stop offset="0.286" stop-color="#949494"/><stop offset="0.321" stop-color="#8d8d8d"/><stop offset="0.357" stop-color="#868686"/><stop offset="0.393" stop-color="#7f7f7f"/><stop offset="0.429" stop-color="#787878"/><stop offset="0.464" stop-color="#747474"/><stop offset="0.5" stop-color="#6f6f6f"/><stop offset="0.536" stop-color="#6b6b6b"/><stop offset="0.571" stop-color="#686868"/><stop offset="0.607" stop-color="#686868"/><stop offset="0.643" stop-color="#6a6a6a"/><stop offset="0.679" stop-color="#686868"/><stop offset="0.714" stop-color="#636363"/><stop offset="0.75" stop-color="#5f5f5f"/><stop offset="0.786" stop-color="#5d5d5d"/><stop offset="0.821" stop-color="#5d5d5d"/><stop offset="0.857" stop-color="#5d5d5d"/><stop offset="0.893" stop-color="#5d5d5d"/><stop offset="0.929" stop-color="#5e5e5e"/><stop offset="0.964" stop-color="#5e5e5e"/><stop offset="1" stop-color="#5e5e5e"/></linearGradient>
<linearGradient id="pg28" gradientUnits="userSpaceOnUse" x1="630" y1="0" x2="1190" y2="0"><stop offset="0" stop-color="#9a9a9a"/><stop offset="0.0357" stop-color="#9c9c9c"/><stop offset="0.0714" stop-color="#9d9d9d"/><stop offset="0.107" stop-color="#9f9f9f"/><stop offset="0.143" stop-color="#a1a1a1"/><stop offset="0.179" stop-color="#a1a1a1"/><stop offset="0.214" stop-color="#9f9f9f"/><stop offset="0.25" stop-color="#9c9c9c"/><stop offset="0.286" stop-color="#969696"/><stop offset="0.321" stop-color="#909090"/><stop offset="0.357" stop-color="#8a8a8a"/><stop offset="0.393" stop-color="#838383"/><stop offset="0.429" stop-color="#7d7d7d"/><stop offset="0.464" stop-color="#787878"/><stop offset="0.5" stop-color="#737373"/><stop offset="0.536" stop-color="#6d6d6d"/><stop offset="0.571" stop-color="#696969"/><stop offset="0.607" stop-color="#696969"/><stop offset="0.643" stop-color="#6b6b6b"/><stop offset="0.679" stop-color="#696969"/><stop offset="0.714" stop-color="#646464"/><stop offset="0.75" stop-color="#5f5f5f"/><stop offset="0.786" stop-color="#5d5d5d"/><stop offset="0.821" stop-color="#5d5d5d"/><stop offset="0.857" stop-color="#5d5d5d"/><stop offset="0.893" stop-color="#5d5d5d"/><stop offset="0.929" stop-color="#5d5d5d"/><stop offset="0.964" stop-color="#5e5e5e"/><stop offset="1" stop-color="#5e5e5e"/></linearGradient>
<linearGradient id="pg29" gradientUnits="userSpaceOnUse" x1="630" y1="0" x2="1190" y2="0"><stop offset="0" stop-color="#9b9b9b"/><stop offset="0.0357" stop-color="#9c9c9c"/><stop offset="0.0714" stop-color="#9e9e9e"/><stop offset="0.107" stop-color="#9f9f9f"/><stop offset="0.143" stop-color="#a1a1a1"/><stop offset="0.179" stop-color="#a2a2a2"/><stop offset="0.214" stop-color="#a0a0a0"/><stop offset="0.25" stop-color="#9d9d9d"/><stop offset="0.286" stop-color="#999999"/><stop offset="0.321" stop-color="#939393"/><stop offset="0.357" stop-color="#8d8d8d"/><stop offset="0.393" stop-color="#878787"/><stop offset="0.429" stop-color="#828282"/><stop offset="0.464" stop-color="#7d7d7d"/><stop offset="0.5" stop-color="#767676"/><stop offset="0.536" stop-color="#6f6f6f"/><stop offset="0.571" stop-color="#6a6a6a"/><stop offset="0.607" stop-color="#696969"/><stop offset="0.643" stop-color="#6b6b6b"/><stop offset="0.679" stop-color="#696969"/><stop offset="0.714" stop-color="#646464"/><stop offset="0.75" stop-color="#5f5f5f"/><stop offset="0.786" stop-color="#5d5d5d"/><stop offset="0.821" stop-color="#5d5d5d"/><stop offset="0.857" stop-color="#5d5d5d"/><stop offset="0.893" stop-color="#5d5d5d"/><stop offset="0.929" stop-color="#5d5d5d"/><stop offset="0.964" stop-color="#5e5e5e"/><stop offset="1" stop-color="#5e5e5e"/></linearGradient>
<linearGradient id="pg30" gradientUnits="userSpaceOnUse" x1="630" y1="0" x2="1190" y2="0"><stop offset="0" stop-color="#9b9b9b"/><stop offset="0.0357" stop-color="#9d9d9d"/><stop offset="0.0714" stop-color="#9e9e9e"/><stop offset="0.107" stop-color="#a0a0a0"/><stop offset="0.143" stop-color="#a1a1a1"/><stop offset="0.179" stop-color="#a2a2a2"/><stop offset="0.214" stop-color="#a1a1a1"/><stop offset="0.25" stop-color="#9e9e9e"/><stop offset="0.286" stop-color="#9a9a9a"/><stop offset="0.321" stop-color="#959595"/><stop offset="0.357" stop-color="#909090"/><stop offset="0.393" stop-color="#8b8b8b"/><stop offset="0.429" stop-color="#868686"/><stop offset="0.464" stop-color="#818181"/><stop offset="0.5" stop-color="#797979"/><stop offset="0.536" stop-color="#717171"/><stop offset="0.571" stop-color="#6b6b6b"/><stop offset="0.607" stop-color="#6a6a6a"/><stop offset="0.643" stop-color="#6a6a6a"/><stop offset="0.679" stop-color="#696969"/><stop offset="0.714" stop-color="#646464"/><stop offset="0.75" stop-color="#606060"/><stop offset="0.786" stop-color="#5e5e5e"/><stop offset="0.821" stop-color="#5d5d5d"/><stop offset="0.857" stop-color="#5d5d5d"/><stop offset="0.893" stop-color="#5e5e5e"/><stop offset="0.929" stop-color="#5e5e5e"/><stop offset="0.964" stop-color="#5e5e5e"/><stop offset="1" stop-color="#5e5e5e"/></linearGradient>
<linearGradient id="pg31" gradientUnits="userSpaceOnUse" x1="630" y1="0" x2="1190" y2="0"><stop offset="0" stop-color="#9b9b9b"/><stop offset="0.0357" stop-color="#9d9d9d"/><stop offset="0.0714" stop-color="#9f9f9f"/><stop offset="0.107" stop-color="#a0a0a0"/><stop offset="0.143" stop-color="#a2a2a2"/><stop offset="0.179" stop-color="#a2a2a2"/><stop offset="0.214" stop-color="#a1a1a1"/><stop offset="0.25" stop-color="#9f9f9f"/><stop offset="0.286" stop-color="#9b9b9b"/><stop offset="0.321" stop-color="#979797"/><stop offset="0.357" stop-color="#939393"/><stop offset="0.393" stop-color="#8e8e8e"/><stop offset="0.429" stop-color="#8a8a8a"/><stop offset="0.464" stop-color="#848484"/><stop offset="0.5" stop-color="#7b7b7b"/><stop offset="0.536" stop-color="#737373"/><stop offset="0.571" stop-color="#6d6d6d"/><stop offset="0.607" stop-color="#6b6b6b"/><stop offset="0.643" stop-color="#6a6a6a"/><stop offset="0.679" stop-color="#686868"/><stop offset="0.714" stop-color="#646464"/><stop offset="0.75" stop-color="#606060"/><stop offset="0.786" stop-color="#5e5e5e"/><stop offset="0.821" stop-color="#5e5e5e"/><stop offset="0.857" stop-color="#5e5e5e"/><stop offset="0.893" stop-color="#5e5e5e"/><stop offset="0.929" stop-color="#5e5e5e"/><stop offset="0.964" stop-color="#5e5e5e"/><stop offset="1" stop-color="#5f5f5f"/></linearGradient>
<linearGradient id="pg32" gradientUnits="userSpaceOnUse" x1="630" y1="0" x2="1190" y2="0"><stop offset="0" stop-color="#9b9b9b"/><stop offset="0.0357" stop-color="#9d9d9d"/><stop offset="0.0714" stop-color="#9f9f9f"/><stop offset="0.107" stop-color="#a1a1a1"/><stop offset="0.143" stop-color="#a2a2a2"/><stop offset="0.179" stop-color="#a2a2a2"/><stop offset="0.214" stop-color="#a1a1a1"/><stop offset="0.25" stop-color="#9f9f9f"/><stop offset="0.286" stop-color="#9d9d9d"/><stop offset="0.321" stop-color="#999999"/><stop offset="0.357" stop-color="#969696"/><stop offset="0.393" stop-color="#929292"/><stop offset="0.429" stop-color="#8d8d8d"/><stop offset="0.464" stop-color="#878787"/><stop offset="0.5" stop-color="#7e7e7e"/><stop offset="0.536" stop-color="#757575"/><stop offset="0.571" stop-color="#6f6f6f"/><stop offset="0.607" stop-color="#6c6c6c"/><stop offset="0.643" stop-color="#6b6b6b"/><stop offset="0.679" stop-color="#686868"/><stop offset="0.714" stop-color="#646464"/><stop offset="0.75" stop-color="#616161"/><stop offset="0.786" stop-color="#5e5e5e"/><stop offset="0.821" stop-color="#5e5e5e"/><stop offset="0.857" stop-color="#5e5e5e"/><stop offset="0.893" stop-color="#5e5e5e"/><stop offset="0.929" stop-color="#5f5f5f"/><stop offset="0.964" stop-color="#5f5f5f"/><stop offset="1" stop-color="#606060"/></linearGradient>
<linearGradient id="pg33" gradientUnits="userSpaceOnUse" x1="630" y1="0" x2="1190" y2="0"><stop offset="0" stop-color="#9b9b9b"/><stop offset="0.0357" stop-color="#9d9d9d"/><stop offset="0.0714" stop-color="#9f9f9f"/><stop offset="0.107" stop-color="#a1a1a1"/><stop offset="0.143" stop-color="#a3a3a3"/><stop offset="0.179" stop-color="#a3a3a3"/><stop offset="0.214" stop-color="#a1a1a1"/><stop offset="0.25" stop-color="#9f9f9f"/><stop offset="0.286" stop-color="#9e9e9e"/><stop offset="0.321" stop-color="#9b9b9b"/><stop offset="0.357" stop-color="#989898"/><stop offset="0.393" stop-color="#959595"/><stop offset="0.429" stop-color="#909090"/><stop offset="0.464" stop-color="#898989"/><stop offset="0.5" stop-color="#808080"/><stop offset="0.536" stop-color="#787878"/><stop offset="0.571" stop-color="#727272"/><stop offset="0.607" stop-color="#6e6e6e"/><stop offset="0.643" stop-color="#6c6c6c"/><stop offset="0.679" stop-color="#696969"/><stop offset="0.714" stop-color="#656565"/><stop offset="0.75" stop-color="#616161"/><stop offset="0.786" stop-color="#5f5f5f"/><stop offset="0.821" stop-color="#5f5f5f"/><stop offset="0.857" stop-color="#5f5f5f"/><stop offset="0.893" stop-color="#5f5f5f"/><stop offset="0.929" stop-color="#5f5f5f"/><stop offset="0.964" stop-color="#606060"/><stop offset="1" stop-color="#616161"/></linearGradient>
<linearGradient id="pg34" gradientUnits="userSpaceOnUse" x1="630" y1="0" x2="1190" y2="0"><stop offset="0" stop-color="#9b9b9b"/><stop offset="0.0357" stop-color="#9d9d9d"/><stop offset="0.0714" stop-color="#9f9f9f"/><stop offset="0.107" stop-color="#a2a2a2"/><stop offset="0.143" stop-color="#a3a3a3"/><stop offset="0.179" stop-color="#a3a3a3"/><stop offset="0.214" stop-color="#a2a2a2"/><stop offset="0.25" stop-color="#a0a0a0"/><stop offset="0.286" stop-color="#9f9f9f"/><stop offset="0.321" stop-color="#9d9d9d"/><stop offset="0.357" stop-color="#9b9b9b"/><stop offset="0.393" stop-color="#979797"/><stop offset="0.429" stop-color="#929292"/><stop offset="0.464" stop-color="#8b8b8b"/><stop offset="0.5" stop-color="#838383"/><stop offset="0.536" stop-color="#7b7b7b"/><stop offset="0.571" stop-color="#747474"/><stop offset="0.607" stop-color="#707070"/><stop offset="0.643" stop-color="#6d6d6d"/><stop offset="0.679" stop-color="#6a6a6a"/><stop offset="0.714" stop-color="#666666"/><stop offset="0.75" stop-color="#626262"/><stop offset="0.786" stop-color="#5f5f5f"/><stop offset="0.821" stop-color="#5f5f5f"/><stop offset="0.857" stop-color="#5f5f5f"/><stop offset="0.893" stop-color="#606060"/><stop offset="0.929" stop-color="#606060"/><stop offset="0.964" stop-color="#616161"/><stop offset="1" stop-color="#626262"/></linearGradient>
<linearGradient id="pg35" gradientUnits="userSpaceOnUse" x1="630" y1="0" x2="1190" y2="0"><stop offset="0" stop-color="#9a9a9a"/><stop offset="0.0357" stop-color="#9d9d9d"/><stop offset="0.0714" stop-color="#9f9f9f"/><stop offset="0.107" stop-color="#a2a2a2"/><stop offset="0.143" stop-color="#a4a4a4"/><stop offset="0.179" stop-color="#a5a5a5"/><stop offset="0.214" stop-color="#a3a3a3"/><stop offset="0.25" stop-color="#a2a2a2"/><stop offset="0.286" stop-color="#a1a1a1"/><stop offset="0.321" stop-color="#9f9f9f"/><stop offset="0.357" stop-color="#9d9d9d"/><stop offset="0.393" stop-color="#999999"/><stop offset="0.429" stop-color="#949494"/><stop offset="0.464" stop-color="#8e8e8e"/><stop offset="0.5" stop-color="#868686"/><stop offset="0.536" stop-color="#7e7e7e"/><stop offset="0.571" stop-color="#787878"/><stop offset="0.607" stop-color="#737373"/><stop offset="0.643" stop-color="#6f6f6f"/><stop offset="0.679" stop-color="#6b6b6b"/><stop offset="0.714" stop-color="#676767"/><stop offset="0.75" stop-color="#636363"/><stop offset="0.786" stop-color="#606060"/><stop offset="0.821" stop-color="#5f5f5f"/><stop offset="0.857" stop-color="#606060"/><stop offset="0.893" stop-color="#606060"/><stop offset="0.929" stop-color="#616161"/><stop offset="0.964" stop-color="#626262"/><stop offset="1" stop-color="#646464"/></linearGradient>
<linearGradient id="pg36" gradientUnits="userSpaceOnUse" x1="630" y1="0" x2="1190" y2="0"><stop offset="0" stop-color="#999999"/><stop offset="0.0357" stop-color="#9c9c9c"/><stop offset="0.0714" stop-color="#9f9f9f"/><stop offset="0.107" stop-color="#a3a3a3"/><stop offset="0.143" stop-color="#a5a5a5"/><stop offset="0.179" stop-color="#a6a6a6"/><stop offset="0.214" stop-color="#a5a5a5"/><stop offset="0.25" stop-color="#a3a3a3"/><stop offset="0.286" stop-color="#a2a2a2"/><stop offset="0.321" stop-color="#a1a1a1"/><stop offset="0.357" stop-color="#9f9f9f"/><stop offset="0.393" stop-color="#9c9c9c"/><stop offset="0.429" stop-color="#969696"/><stop offset="0.464" stop-color="#909090"/><stop offset="0.5" stop-color="#898989"/><stop offset="0.536" stop-color="#828282"/><stop offset="0.571" stop-color="#7b7b7b"/><stop offset="0.607" stop-color="#767676"/><stop offset="0.643" stop-color="#727272"/><stop offset="0.679" stop-color="#6d6d6d"/><stop offset="0.714" stop-color="#696969"/><stop offset="0.75" stop-color="#646464"/><stop offset="0.786" stop-color="#616161"/><stop offset="0.821" stop-color="#606060"/><stop offset="0.857" stop-color="#616161"/><stop offset="0.893" stop-color="#616161"/><stop offset="0.929" stop-color="#626262"/><stop offset="0.964" stop-color="#646464"/><stop offset="1" stop-color="#656565"/></linearGradient>
<linearGradient id="pg37" gradientUnits="userSpaceOnUse" x1="630" y1="0" x2="1190" y2="0"><stop offset="0" stop-color="#979797"/><stop offset="0.0357" stop-color="#9a9a9a"/><stop offset="0.0714" stop-color="#9e9e9e"/><stop offset="0.107" stop-color="#a3a3a3"/><stop offset="0.143" stop-color="#a7a7a7"/><stop offset="0.179" stop-color="#a8a8a8"/><stop offset="0.214" stop-color="#a7a7a7"/><stop offset="0.25" stop-color="#a5a5a5"/><stop offset="0.286" stop-color="#a4a4a4"/><stop offset="0.321" stop-color="#a3a3a3"/><stop offset="0.357" stop-color="#a1a1a1"/><stop offset="0.393" stop-color="#9e9e9e"/><stop offset="0.429" stop-color="#989898"/><stop offset="0.464" stop-color="#929292"/><stop offset="0.5" stop-color="#8b8b8b"/><stop offset="0.536" stop-color="#868686"/><stop offset="0.571" stop-color="#808080"/><stop offset="0.607" stop-color="#7a7a7a"/><stop offset="0.643" stop-color="#757575"/><stop offset="0.679" stop-color="#707070"/><stop offset="0.714" stop-color="#6b6b6b"/><stop offset="0.75" stop-color="#666666"/><stop offset="0.786" stop-color="#626262"/><stop offset="0.821" stop-color="#616161"/><stop offset="0.857" stop-color="#616161"/><stop offset="0.893" stop-color="#626262"/><stop offset="0.929" stop-color="#636363"/><stop offset="0.964" stop-color="#656565"/><stop offset="1" stop-color="#676767"/></linearGradient>
<linearGradient id="pg38" gradientUnits="userSpaceOnUse" x1="630" y1="0" x2="1190" y2="0"><stop offset="0" stop-color="#969696"/><stop offset="0.0357" stop-color="#999999"/><stop offset="0.0714" stop-color="#9d9d9d"/><stop offset="0.107" stop-color="#a3a3a3"/><stop offset="0.143" stop-color="#a8a8a8"/><stop offset="0.179" stop-color="#a9a9a9"/><stop offset="0.214" stop-color="#a9a9a9"/><stop offset="0.25" stop-color="#a7a7a7"/><stop offset="0.286" stop-color="#a6a6a6"/><stop offset="0.321" stop-color="#a5a5a5"/><stop offset="0.357" stop-color="#a3a3a3"/><stop offset="0.393" stop-color="#a0a0a0"/><stop offset="0.429" stop-color="#9a9a9a"/><stop offset="0.464" stop-color="#939393"/><stop offset="0.5" stop-color="#8d8d8d"/><stop offset="0.536" stop-color="#898989"/><stop offset="0.571" stop-color="#848484"/><stop offset="0.607" stop-color="#7e7e7e"/><stop offset="0.643" stop-color="#797979"/><stop offset="0.679" stop-color="#737373"/><stop offset="0.714" stop-color="#6d6d6d"/><stop offset="0.75" stop-color="#686868"/><stop offset="0.786" stop-color="#646464"/><stop offset="0.821" stop-color="#626262"/><stop offset="0.857" stop-color="#626262"/><stop offset="0.893" stop-color="#636363"/><stop offset="0.929" stop-color="#646464"/><stop offset="0.964" stop-color="#666666"/><stop offset="1" stop-color="#686868"/></linearGradient>
<linearGradient id="pg39" gradientUnits="userSpaceOnUse" x1="630" y1="0" x2="1190" y2="0"><stop offset="0" stop-color="#939393"/><stop offset="0.0357" stop-color="#979797"/><stop offset="0.0714" stop-color="#9c9c9c"/><stop offset="0.107" stop-color="#a2a2a2"/><stop offset="0.143" stop-color="#a8a8a8"/><stop offset="0.179" stop-color="#ababab"/><stop offset="0.214" stop-color="#ababab"/><stop offset="0.25" stop-color="#a9a9a9"/><stop offset="0.286" stop-color="#a8a8a8"/><stop offset="0.321" stop-color="#a7a7a7"/><stop offset="0.357" stop-color="#a5a5a5"/><stop offset="0.393" stop-color="#a2a2a2"/><stop offset="0.429" stop-color="#9c9c9c"/><stop offset="0.464" stop-color="#959595"/><stop offset="0.5" stop-color="#8e8e8e"/><stop offset="0.536" stop-color="#8a8a8a"/><stop offset="0.571" stop-color="#888888"/><stop offset="0.607" stop-color="#838383"/><stop offset="0.643" stop-color="#7d7d7d"/><stop offset="0.679" stop-color="#777777"/><stop offset="0.714" stop-color="#707070"/><stop offset="0.75" stop-color="#6a6a6a"/><stop offset="0.786" stop-color="#666666"/><stop offset="0.821" stop-color="#646464"/><stop offset="0.857" stop-color="#646464"/><stop offset="0.893" stop-color="#646464"/><stop offset="0.929" stop-color="#666666"/><stop offset="0.964" stop-color="#686868"/><stop offset="1" stop-color="#6a6a6a"/></linearGradient>
<linearGradient id="pg40" gradientUnits="userSpaceOnUse" x1="630" y1="0" x2="1190" y2="0"><stop offset="0" stop-color="#919191"/><stop offset="0.0357" stop-color="#949494"/><stop offset="0.0714" stop-color="#999999"/><stop offset="0.107" stop-color="#a1a1a1"/><stop offset="0.143" stop-color="#a8a8a8"/><stop offset="0.179" stop-color="#acacac"/><stop offset="0.214" stop-color="#acacac"/><stop offset="0.25" stop-color="#ababab"/><stop offset="0.286" stop-color="#a9a9a9"/><stop offset="0.321" stop-color="#a8a8a8"/><stop offset="0.357" stop-color="#a6a6a6"/><stop offset="0.393" stop-color="#a3a3a3"/><stop offset="0.429" stop-color="#9d9d9d"/><stop offset="0.464" stop-color="#969696"/><stop offset="0.5" stop-color="#8f8f8f"/><stop offset="0.536" stop-color="#8b8b8b"/><stop offset="0.571" stop-color="#8a8a8a"/><stop offset="0.607" stop-color="#878787"/><stop offset="0.643" stop-color="#818181"/><stop offset="0.679" stop-color="#7a7a7a"/><stop offset="0.714" stop-color="#737373"/><stop offset="0.75" stop-color="#6d6d6d"/><stop offset="0.786" stop-color="#686868"/><stop offset="0.821" stop-color="#656565"/><stop offset="0.857" stop-color="#656565"/><stop offset="0.893" stop-color="#656565"/><stop offset="0.929" stop-color="#676767"/><stop offset="0.964" stop-color="#696969"/><stop offset="1" stop-color="#6b6b6b"/></linearGradient>
<linearGradient id="pg41" gradientUnits="userSpaceOnUse" x1="630" y1="0" x2="1190" y2="0"><stop offset="0" stop-color="#8f8f8f"/><stop offset="0.0357" stop-color="#919191"/><stop offset="0.0714" stop-color="#969696"/><stop offset="0.107" stop-color="#9f9f9f"/><stop offset="0.143" stop-color="#a8a8a8"/><stop offset="0.179" stop-color="#adadad"/><stop offset="0.214" stop-color="#aeaeae"/><stop offset="0.25" stop-color="#acacac"/><stop offset="0.286" stop-color="#ababab"/><stop offset="0.321" stop-color="#a9a9a9"/><stop offset="0.357" stop-color="#a7a7a7"/><stop offset="0.393" stop-color="#a4a4a4"/><stop offset="0.429" stop-color="#9e9e9e"/><stop offset="0.464" stop-color="#979797"/><stop offset="0.5" stop-color="#909090"/><stop offset="0.536" stop-color="#8c8c8c"/><stop offset="0.571" stop-color="#8b8b8b"/><stop offset="0.607" stop-color="#8a8a8a"/><stop offset="0.643" stop-color="#858585"/><stop offset="0.679" stop-color="#7e7e7e"/><stop offset="0.714" stop-color="#767676"/><stop offset="0.75" stop-color="#6f6f6f"/><stop offset="0.786" stop-color="#6a6a6a"/><stop offset="0.821" stop-color="#676767"/><stop offset="0.857" stop-color="#676767"/><stop offset="0.893" stop-color="#676767"/><stop offset="0.929" stop-color="#686868"/><stop offset="0.964" stop-color="#6a6a6a"/><stop offset="1" stop-color="#6c6c6c"/></linearGradient>
<linearGradient id="pg42" gradientUnits="userSpaceOnUse" x1="630" y1="0" x2="1190" y2="0"><stop offset="0" stop-color="#8d8d8d"/><stop offset="0.0357" stop-color="#8f8f8f"/><stop offset="0.0714" stop-color="#939393"/><stop offset="0.107" stop-color="#9c9c9c"/><stop offset="0.143" stop-color="#a7a7a7"/><stop offset="0.179" stop-color="#aeaeae"/><stop offset="0.214" stop-color="#afafaf"/><stop offset="0.25" stop-color="#adadad"/><stop offset="0.286" stop-color="#ababab"/><stop offset="0.321" stop-color="#aaaaaa"/><stop offset="0.357" stop-color="#a8a8a8"/><stop offset="0.393" stop-color="#a5a5a5"/><stop offset="0.429" stop-color="#a0a0a0"/><stop offset="0.464" stop-color="#989898"/><stop offset="0.5" stop-color="#909090"/><stop offset="0.536" stop-color="#8c8c8c"/><stop offset="0.571" stop-color="#8b8b8b"/><stop offset="0.607" stop-color="#8b8b8b"/><stop offset="0.643" stop-color="#888888"/><stop offset="0.679" stop-color="#828282"/><stop offset="0.714" stop-color="#797979"/><stop offset="0.75" stop-color="#727272"/><stop offset="0.786" stop-color="#6c6c6c"/><stop offset="0.821" stop-color="#696969"/><stop offset="0.857" stop-color="#686868"/><stop offset="0.893" stop-color="#686868"/><stop offset="0.929" stop-color="#6a6a6a"/><stop offset="0.964" stop-color="#6b6b6b"/><stop offset="1" stop-color="#6d6d6d"/></linearGradient>
<linearGradient id="pg43" gradientUnits="userSpaceOnUse" x1="630" y1="0" x2="1190" y2="0"><stop offset="0" stop-color="#8b8b8b"/><stop offset="0.0357" stop-color="#8c8c8c"/><stop offset="0.0714" stop-color="#909090"/><stop offset="0.107" stop-color="#9a9a9a"/><stop offset="0.143" stop-color="#a7a7a7"/><stop offset="0.179" stop-color="#aeaeae"/><stop offset="0.214" stop-color="#afafaf"/><stop offset="0.25" stop-color="#aeaeae"/><stop offset="0.286" stop-color="#acacac"/><stop offset="0.321" stop-color="#aaaaaa"/><stop offset="0.357" stop-color="#a9a9a9"/><stop offset="0.393" stop-color="#a6a6a6"/><stop offset="0.429" stop-color="#a1a1a1"/><stop offset="0.464" stop-color="#999999"/><stop offset="0.5" stop-color="#919191"/><stop offset="0.536" stop-color="#8c8c8c"/><stop offset="0.571" stop-color="#8b8b8b"/><stop offset="0.607" stop-color="#8b8b8b"/><stop offset="0.643" stop-color="#8a8a8a"/><stop offset="0.679" stop-color="#858585"/><stop offset="0.714" stop-color="#7c7c7c"/><stop offset="0.75" stop-color="#757575"/><stop offset="0.786" stop-color="#6f6f6f"/><stop offset="0.821" stop-color="#6b6b6b"/><stop offset="0.857" stop-color="#696969"/><stop offset="0.893" stop-color="#6a6a6a"/><stop offset="0.929" stop-color="#6b6b6b"/><stop offset="0.964" stop-color="#6c6c6c"/><stop offset="1" stop-color="#6e6e6e"/></linearGradient>
<linearGradient id="pg44" gradientUnits="userSpaceOnUse" x1="630" y1="0" x2="1190" y2="0"><stop offset="0" stop-color="#8a8a8a"/><stop offset="0.0357" stop-color="#8b8b8b"/><stop offset="0.0714" stop-color="#8e8e8e"/><stop offset="0.107" stop-color="#979797"/><stop offset="0.143" stop-color="#a5a5a5"/><stop offset="0.179" stop-color="#adadad"/><stop offset="0.214" stop-color="#aeaeae"/><stop offset="0.25" stop-color="#adadad"/><stop offset="0.286" stop-color="#acacac"/><stop offset="0.321" stop-color="#aaaaaa"/><stop offset="0.357" stop-color="#a9a9a9"/><stop offset="0.393" stop-color="#a7a7a7"/><stop offset="0.429" stop-color="#a2a2a2"/><stop offset="0.464" stop-color="#9b9b9b"/><stop offset="0.5" stop-color="#929292"/><stop offset="0.536" stop-color="#8c8c8c"/><stop offset="0.571" stop-color="#8a8a8a"/><stop offset="0.607" stop-color="#8a8a8a"/><stop offset="0.643" stop-color="#8a8a8a"/><stop offset="0.679" stop-color="#888888"/><stop offset="0.714" stop-color="#808080"/><stop offset="0.75" stop-color="#787878"/><stop offset="0.786" stop-color="#717171"/><stop offset="0.821" stop-color="#6c6c6c"/><stop offset="0.857" stop-color="#6a6a6a"/><stop offset="0.893" stop-color="#6b6b6b"/><stop offset="0.929" stop-color="#6c6c6c"/><stop offset="0.964" stop-color="#6d6d6d"/><stop offset="1" stop-color="#6e6e6e"/></linearGradient>
<linearGradient id="pg45" gradientUnits="userSpaceOnUse" x1="630" y1="0" x2="1190" y2="0"><stop offset="0" stop-color="#898989"/><stop offset="0.0357" stop-color="#8a8a8a"/><stop offset="0.0714" stop-color="#8d8d8d"/><stop offset="0.107" stop-color="#969696"/><stop offset="0.143" stop-color="#a3a3a3"/><stop offset="0.179" stop-color="#ababab"/><stop offset="0.214" stop-color="#adadad"/><stop offset="0.25" stop-color="#acacac"/><stop offset="0.286" stop-color="#ababab"/><stop offset="0.321" stop-color="#aaaaaa"/><stop offset="0.357" stop-color="#a9a9a9"/><stop offset="0.393" stop-color="#a7a7a7"/><stop offset="0.429" stop-color="#a4a4a4"/><stop offset="0.464" stop-color="#9d9d9d"/><stop offset="0.5" stop-color="#949494"/><stop offset="0.536" stop-color="#8d8d8d"/><stop offset="0.571" stop-color="#8b8b8b"/><stop offset="0.607" stop-color="#8a8a8a"/><stop offset="0.643" stop-color="#888888"/><stop offset="0.679" stop-color="#888888"/><stop offset="0.714" stop-color="#838383"/><stop offset="0.75" stop-color="#7a7a7a"/><stop offset="0.786" stop-color="#727272"/><stop offset="0.821" stop-color="#6d6d6d"/><stop offset="0.857" stop-color="#6b6b6b"/><stop offset="0.893" stop-color="#6b6b6b"/><stop offset="0.929" stop-color="#6c6c6c"/><stop offset="0.964" stop-color="#6d6d6d"/><stop offset="1" stop-color="#6f6f6f"/></linearGradient>
<linearGradient id="pg46" gradientUnits="userSpaceOnUse" x1="630" y1="0" x2="1190" y2="0"><stop offset="0" stop-color="#898989"/><stop offset="0.0357" stop-color="#8a8a8a"/><stop offset="0.0714" stop-color="#8d8d8d"/><stop offset="0.107" stop-color="#969696"/><stop offset="0.143" stop-color="#a0a0a0"/><stop offset="0.179" stop-color="#a8a8a8"/><stop offset="0.214" stop-color="#aaaaaa"/><stop offset="0.25" stop-color="#aaaaaa"/><stop offset="0.286" stop-color="#aaaaaa"/><stop offset="0.321" stop-color="#a9a9a9"/><stop offset="0.357" stop-color="#a9a9a9"/><stop offset="0.393" stop-color="#a8a8a8"/><stop offset="0.429" stop-color="#a6a6a6"/><stop offset="0.464" stop-color="#a0a0a0"/><stop offset="0.5" stop-color="#989898"/><stop offset="0.536" stop-color="#8f8f8f"/><stop offset="0.571" stop-color="#8d8d8d"/><stop offset="0.607" stop-color="#8a8a8a"/><stop offset="0.643" stop-color="#878787"/><stop offset="0.679" stop-color="#878787"/><stop offset="0.714" stop-color="#858585"/><stop offset="0.75" stop-color="#7c7c7c"/><stop offset="0.786" stop-color="#747474"/><stop offset="0.821" stop-color="#6e6e6e"/><stop offset="0.857" stop-color="#6b6b6b"/><stop offset="0.893" stop-color="#6b6b6b"/><stop offset="0.929" stop-color="#6c6c6c"/><stop offset="0.964" stop-color="#6e6e6e"/><stop offset="1" stop-color="#707070"/></linearGradient>
<linearGradient id="pg47" gradientUnits="userSpaceOnUse" x1="630" y1="0" x2="1190" y2="0"><stop offset="0" stop-color="#898989"/><stop offset="0.0357" stop-color="#8a8a8a"/><stop offset="0.0714" stop-color="#8e8e8e"/><stop offset="0.107" stop-color="#959595"/><stop offset="0.143" stop-color="#9e9e9e"/><stop offset="0.179" stop-color="#a5a5a5"/><stop offset="0.214" stop-color="#a8a8a8"/><stop offset="0.25" stop-color="#a8a8a8"/><stop offset="0.286" stop-color="#a8a8a8"/><stop offset="0.321" stop-color="#a8a8a8"/><stop offset="0.357" stop-color="#a8a8a8"/><stop offset="0.393" stop-color="#a8a8a8"/><stop offset="0.429" stop-color="#a7a7a7"/><stop offset="0.464" stop-color="#a4a4a4"/><stop offset="0.5" stop-color="#9d9d9d"/><stop offset="0.536" stop-color="#959595"/><stop offset="0.571" stop-color="#909090"/><stop offset="0.607" stop-color="#8c8c8c"/><stop offset="0.643" stop-color="#868686"/><stop offset="0.679" stop-color="#878787"/><stop offset="0.714" stop-color="#888888"/><stop offset="0.75" stop-color="#7e7e7e"/><stop offset="0.786" stop-color="#757575"/><stop offset="0.821" stop-color="#6f6f6f"/><stop offset="0.857" stop-color="#6c6c6c"/><stop offset="0.893" stop-color="#6b6b6b"/><stop offset="0.929" stop-color="#6c6c6c"/><stop offset="0.964" stop-color="#6e6e6e"/><stop offset="1" stop-color="#707070"/></linearGradient>
<linearGradient id="pg48" gradientUnits="userSpaceOnUse" x1="630" y1="0" x2="1190" y2="0"><stop offset="0" stop-color="#8a8a8a"/><stop offset="0.0357" stop-color="#8b8b8b"/><stop offset="0.0714" stop-color="#8f8f8f"/><stop offset="0.107" stop-color="#959595"/><stop offset="0.143" stop-color="#9c9c9c"/><stop offset="0.179" stop-color="#a2a2a2"/><stop offset="0.214" stop-color="#a5a5a5"/><stop offset="0.25" stop-color="#a6a6a6"/><stop offset="0.286" stop-color="#a6a6a6"/><stop offset="0.321" stop-color="#a6a6a6"/><stop offset="0.357" stop-color="#a7a7a7"/><stop offset="0.393" stop-color="#a8a8a8"/><stop offset="0.429" stop-color="#a9a9a9"/><stop offset="0.464" stop-color="#a7a7a7"/><stop offset="0.5" stop-color="#a2a2a2"/><stop offset="0.536" stop-color="#9c9c9c"/><stop offset="0.571" stop-color="#969696"/><stop offset="0.607" stop-color="#8f8f8f"/><stop offset="0.643" stop-color="#888888"/><stop offset="0.679" stop-color="#888888"/><stop offset="0.714" stop-color="#898989"/><stop offset="0.75" stop-color="#808080"/><stop offset="0.786" stop-color="#767676"/><stop offset="0.821" stop-color="#707070"/><stop offset="0.857" stop-color="#6c6c6c"/><stop offset="0.893" stop-color="#6b6b6b"/><stop offset="0.929" stop-color="#6c6c6c"/><stop offset="0.964" stop-color="#6e6e6e"/><stop offset="1" stop-color="#717171"/></linearGradient>
<linearGradient id="pg49" gradientUnits="userSpaceOnUse" x1="630" y1="0" x2="1190" y2="0"><stop offset="0" stop-color="#8b8b8b"/><stop offset="0.0357" stop-color="#8d8d8d"/><stop offset="0.0714" stop-color="#909090"/><stop offset="0.107" stop-color="#959595"/><stop offset="0.143" stop-color="#9b9b9b"/><stop offset="0.179" stop-color="#a0a0a0"/><stop offset="0.214" stop-color="#a3a3a3"/><stop offset="0.25" stop-color="#a4a4a4"/><stop offset="0.286" stop-color="#a4a4a4"/><stop offset="0.321" stop-color="#a5a5a5"/><stop offset="0.357" stop-color="#a6a6a6"/><stop offset="0.393" stop-color="#a7a7a7"/><stop offset="0.429" stop-color="#a9a9a9"/><stop offset="0.464" stop-color="#aaaaaa"/><stop offset="0.5" stop-color="#a8a8a8"/><stop offset="0.536" stop-color="#a3a3a3"/><stop offset="0.571" stop-color="#9c9c9c"/><stop offset="0.607" stop-color="#939393"/><stop offset="0.643" stop-color="#8c8c8c"/><stop offset="0.679" stop-color="#8a8a8a"/><stop offset="0.714" stop-color="#898989"/><stop offset="0.75" stop-color="#818181"/><stop offset="0.786" stop-color="#787878"/><stop offset="0.821" stop-color="#717171"/><stop offset="0.857" stop-color="#6d6d6d"/><stop offset="0.893" stop-color="#6c6c6c"/><stop offset="0.929" stop-color="#6d6d6d"/><stop offset="0.964" stop-color="#6f6f6f"/><stop offset="1" stop-color="#727272"/></linearGradient>
<linearGradient id="pg50" gradientUnits="userSpaceOnUse" x1="630" y1="0" x2="1190" y2="0"><stop offset="0" stop-color="#8c8c8c"/><stop offset="0.0357" stop-color="#8e8e8e"/><stop offset="0.0714" stop-color="#919191"/><stop offset="0.107" stop-color="#969696"/><stop offset="0.143" stop-color="#9a9a9a"/><stop offset="0.179" stop-color="#9e9e9e"/><stop offset="0.214" stop-color="#a1a1a1"/><stop offset="0.25" stop-color="#a2a2a2"/><stop offset="0.286" stop-color="#a2a2a2"/><stop offset="0.321" stop-color="#a3a3a3"/><stop offset="0.357" stop-color="#a4a4a4"/><stop offset="0.393" stop-color="#a6a6a6"/><stop offset="0.429" stop-color="#a9a9a9"/><stop offset="0.464" stop-color="#acacac"/><stop offset="0.5" stop-color="#acacac"/><stop offset="0.536" stop-color="#a8a8a8"/><stop offset="0.571" stop-color="#a1a1a1"/><stop offset="0.607" stop-color="#979797"/><stop offset="0.643" stop-color="#909090"/><stop offset="0.679" stop-color="#8c8c8c"/><stop offset="0.714" stop-color="#8a8a8a"/><stop offset="0.75" stop-color="#838383"/><stop offset="0.786" stop-color="#7a7a7a"/><stop offset="0.821" stop-color="#737373"/><stop offset="0.857" stop-color="#6f6f6f"/><stop offset="0.893" stop-color="#6d6d6d"/><stop offset="0.929" stop-color="#6e6e6e"/><stop offset="0.964" stop-color="#707070"/><stop offset="1" stop-color="#737373"/></linearGradient>
<linearGradient id="pg51" gradientUnits="userSpaceOnUse" x1="630" y1="0" x2="1190" y2="0"><stop offset="0" stop-color="#8d8d8d"/><stop offset="0.0357" stop-color="#8f8f8f"/><stop offset="0.0714" stop-color="#929292"/><stop offset="0.107" stop-color="#969696"/><stop offset="0.143" stop-color="#9a9a9a"/><stop offset="0.179" stop-color="#9d9d9d"/><stop offset="0.214" stop-color="#9f9f9f"/><stop offset="0.25" stop-color="#a0a0a0"/><stop offset="0.286" stop-color="#a0a0a0"/><stop offset="0.321" stop-color="#a1a1a1"/><stop offset="0.357" stop-color="#a2a2a2"/><stop offset="0.393" stop-color="#a4a4a4"/><stop offset="0.429" stop-color="#a7a7a7"/><stop offset="0.464" stop-color="#acacac"/><stop offset="0.5" stop-color="#acacac"/><stop offset="0.536" stop-color="#aaaaaa"/><stop offset="0.571" stop-color="#a4a4a4"/><stop offset="0.607" stop-color="#9a9a9a"/><stop offset="0.643" stop-color="#929292"/><stop offset="0.679" stop-color="#8e8e8e"/><stop offset="0.714" stop-color="#8b8b8b"/><stop offset="0.75" stop-color="#858585"/><stop offset="0.786" stop-color="#7c7c7c"/><stop offset="0.821" stop-color="#767676"/><stop offset="0.857" stop-color="#717171"/><stop offset="0.893" stop-color="#6f6f6f"/><stop offset="0.929" stop-color="#707070"/><stop offset="0.964" stop-color="#727272"/><stop offset="1" stop-color="#757575"/></linearGradient>
<linearGradient id="pg52" gradientUnits="userSpaceOnUse" x1="630" y1="0" x2="1190" y2="0"><stop offset="0" stop-color="#8f8f8f"/><stop offset="0.0357" stop-color="#919191"/><stop offset="0.0714" stop-color="#949494"/><stop offset="0.107" stop-color="#979797"/><stop offset="0.143" stop-color="#9a9a9a"/><stop offset="0.179" stop-color="#9d9d9d"/><stop offset="0.214" stop-color="#9f9f9f"/><stop offset="0.25" stop-color="#9f9f9f"/><stop offset="0.286" stop-color="#9f9f9f"/><stop offset="0.321" stop-color="#9f9f9f"/><stop offset="0.357" stop-color="#a0a0a0"/><stop offset="0.393" stop-color="#a2a2a2"/><stop offset="0.429" stop-color="#a5a5a5"/><stop offset="0.464" stop-color="#a9a9a9"/><stop offset="0.5" stop-color="#aaaaaa"/><stop offset="0.536" stop-color="#a9a9a9"/><stop offset="0.571" stop-color="#a3a3a3"/><stop offset="0.607" stop-color="#9a9a9a"/><stop offset="0.643" stop-color="#949494"/><stop offset="0.679" stop-color="#8f8f8f"/><stop offset="0.714" stop-color="#8c8c8c"/><stop offset="0.75" stop-color="#878787"/><stop offset="0.786" stop-color="#808080"/><stop offset="0.821" stop-color="#7a7a7a"/><stop offset="0.857" stop-color="#757575"/><stop offset="0.893" stop-color="#727272"/><stop offset="0.929" stop-color="#727272"/><stop offset="0.964" stop-color="#747474"/><stop offset="1" stop-color="#777777"/></linearGradient>
<linearGradient id="pg53" gradientUnits="userSpaceOnUse" x1="630" y1="0" x2="1190" y2="0"><stop offset="0" stop-color="#909090"/><stop offset="0.0357" stop-color="#929292"/><stop offset="0.0714" stop-color="#959595"/><stop offset="0.107" stop-color="#989898"/><stop offset="0.143" stop-color="#9b9b9b"/><stop offset="0.179" stop-color="#9d9d9d"/><stop offset="0.214" stop-color="#9f9f9f"/><stop offset="0.25" stop-color="#9f9f9f"/><stop offset="0.286" stop-color="#9e9e9e"/><stop offset="0.321" stop-color="#9e9e9e"/><stop offset="0.357" stop-color="#9f9f9f"/><stop offset="0.393" stop-color="#a0a0a0"/><stop offset="0.429" stop-color="#a2a2a2"/><stop offset="0.464" stop-color="#a5a5a5"/><stop offset="0.5" stop-color="#a6a6a6"/><stop offset="0.536" stop-color="#a5a5a5"/><stop offset="0.571" stop-color="#a0a0a0"/><stop offset="0.607" stop-color="#9a9a9a"/><stop offset="0.643" stop-color="#949494"/><stop offset="0.679" stop-color="#8f8f8f"/><stop offset="0.714" stop-color="#8c8c8c"/><stop offset="0.75" stop-color="#898989"/><stop offset="0.786" stop-color="#848484"/><stop offset="0.821" stop-color="#7e7e7e"/><stop offset="0.857" stop-color="#797979"/><stop offset="0.893" stop-color="#757575"/><stop offset="0.929" stop-color="#757575"/><stop offset="0.964" stop-color="#777777"/><stop offset="1" stop-color="#7a7a7a"/></linearGradient>
<linearGradient id="pg54" gradientUnits="userSpaceOnUse" x1="630" y1="0" x2="1190" y2="0"><stop offset="0" stop-color="#929292"/><stop offset="0.0357" stop-color="#949494"/><stop offset="0.0714" stop-color="#969696"/><stop offset="0.107" stop-color="#989898"/><stop offset="0.143" stop-color="#9b9b9b"/><stop offset="0.179" stop-color="#9e9e9e"/><stop offset="0.214" stop-color="#a0a0a0"/><stop offset="0.25" stop-color="#a0a0a0"/><stop offset="0.286" stop-color="#9e9e9e"/><stop offset="0.321" stop-color="#9e9e9e"/><stop offset="0.357" stop-color="#9e9e9e"/><stop offset="0.393" stop-color="#9e9e9e"/><stop offset="0.429" stop-color="#a0a0a0"/><stop offset="0.464" stop-color="#a1a1a1"/><stop offset="0.5" stop-color="#a1a1a1"/><stop offset="0.536" stop-color="#a0a0a0"/><stop offset="0.571" stop-color="#9d9d9d"/><stop offset="0.607" stop-color="#999999"/><stop offset="0.643" stop-color="#949494"/><stop offset="0.679" stop-color="#8f8f8f"/><stop offset="0.714" stop-color="#8c8c8c"/><stop offset="0.75" stop-color="#8b8b8b"/><stop offset="0.786" stop-color="#888888"/><stop offset="0.821" stop-color="#828282"/><stop offset="0.857" stop-color="#7d7d7d"/><stop offset="0.893" stop-color="#797979"/><stop offset="0.929" stop-color="#797979"/><stop offset="0.964" stop-color="#7a7a7a"/><stop offset="1" stop-color="#7d7d7d"/></linearGradient>
<linearGradient id="pg55" gradientUnits="userSpaceOnUse" x1="630" y1="0" x2="1190" y2="0"><stop offset="0" stop-color="#939393"/><stop offset="0.0357" stop-color="#959595"/><stop offset="0.0714" stop-color="#979797"/><stop offset="0.107" stop-color="#999999"/><stop offset="0.143" stop-color="#9c9c9c"/><stop offset="0.179" stop-color="#9e9e9e"/><stop offset="0.214" stop-color="#a1a1a1"/><stop offset="0.25" stop-color="#a1a1a1"/><stop offset="0.286" stop-color="#a0a0a0"/><stop offset="0.321" stop-color="#9f9f9f"/><stop offset="0.357" stop-color="#9f9f9f"/><stop offset="0.393" stop-color="#9f9f9f"/><stop offset="0.429" stop-color="#a0a0a0"/><stop offset="0.464" stop-color="#9f9f9f"/><stop offset="0.5" stop-color="#9e9e9e"/><stop offset="0.536" stop-color="#9c9c9c"/><stop offset="0.571" stop-color="#9a9a9a"/><stop offset="0.607" stop-color="#989898"/><stop offset="0.643" stop-color="#949494"/><stop offset="0.679" stop-color="#8f8f8f"/><stop offset="0.714" stop-color="#8d8d8d"/><stop offset="0.75" stop-color="#8d8d8d"/><stop offset="0.786" stop-color="#8b8b8b"/><stop offset="0.821" stop-color="#878787"/><stop offset="0.857" stop-color="#828282"/><stop offset="0.893" stop-color="#7e7e7e"/><stop offset="0.929" stop-color="#7d7d7d"/><stop offset="0.964" stop-color="#7e7e7e"/><stop offset="1" stop-color="#808080"/></linearGradient>
<linearGradient id="pg56" gradientUnits="userSpaceOnUse" x1="630" y1="0" x2="1190" y2="0"><stop offset="0" stop-color="#949494"/><stop offset="0.0357" stop-color="#969696"/><stop offset="0.0714" stop-color="#989898"/><stop offset="0.107" stop-color="#9a9a9a"/><stop offset="0.143" stop-color="#9c9c9c"/><stop offset="0.179" stop-color="#9f9f9f"/><stop offset="0.214" stop-color="#a1a1a1"/><stop offset="0.25" stop-color="#a3a3a3"/><stop offset="0.286" stop-color="#a1a1a1"/><stop offset="0.321" stop-color="#a0a0a0"/><stop offset="0.357" stop-color="#a1a1a1"/><stop offset="0.393" stop-color="#a1a1a1"/><stop offset="0.429" stop-color="#a1a1a1"/><stop offset="0.464" stop-color="#9f9f9f"/><stop offset="0.5" stop-color="#9d9d9d"/><stop offset="0.536" stop-color="#9a9a9a"/><stop offset="0.571" stop-color="#999999"/><stop offset="0.607" stop-color="#999999"/><stop offset="0.643" stop-color="#969696"/><stop offset="0.679" stop-color="#919191"/><stop offset="0.714" stop-color="#8f8f8f"/><stop offset="0.75" stop-color="#8f8f8f"/><stop offset="0.786" stop-color="#8d8d8d"/><stop offset="0.821" stop-color="#8a8a8a"/><stop offset="0.857" stop-color="#868686"/><stop offset="0.893" stop-color="#838383"/><stop offset="0.929" stop-color="#828282"/><stop offset="0.964" stop-color="#828282"/><stop offset="1" stop-color="#848484"/></linearGradient>
<linearGradient id="pg57" gradientUnits="userSpaceOnUse" x1="630" y1="0" x2="1190" y2="0"><stop offset="0" stop-color="#949494"/><stop offset="0.0357" stop-color="#969696"/><stop offset="0.0714" stop-color="#989898"/><stop offset="0.107" stop-color="#9a9a9a"/><stop offset="0.143" stop-color="#9d9d9d"/><stop offset="0.179" stop-color="#9f9f9f"/><stop offset="0.214" stop-color="#a2a2a2"/><stop offset="0.25" stop-color="#a3a3a3"/><stop offset="0.286" stop-color="#a1a1a1"/><stop offset="0.321" stop-color="#a1a1a1"/><stop offset="0.357" stop-color="#a3a3a3"/><stop offset="0.393" stop-color="#a5a5a5"/><stop offset="0.429" stop-color="#a4a4a4"/><stop offset="0.464" stop-color="#a1a1a1"/><stop offset="0.5" stop-color="#9e9e9e"/><stop offset="0.536" stop-color="#9c9c9c"/><stop offset="0.571" stop-color="#9b9b9b"/><stop offset="0.607" stop-color="#9b9b9b"/><stop offset="0.643" stop-color="#989898"/><stop offset="0.679" stop-color="#949494"/><stop offset="0.714" stop-color="#929292"/><stop offset="0.75" stop-color="#919191"/><stop offset="0.786" stop-color="#909090"/><stop offset="0.821" stop-color="#8d8d8d"/><stop offset="0.857" stop-color="#8a8a8a"/><stop offset="0.893" stop-color="#888888"/><stop offset="0.929" stop-color="#868686"/><stop offset="0.964" stop-color="#868686"/><stop offset="1" stop-color="#878787"/></linearGradient>
<linearGradient id="pg58" gradientUnits="userSpaceOnUse" x1="630" y1="0" x2="1190" y2="0"><stop offset="0" stop-color="#959595"/><stop offset="0.0357" stop-color="#979797"/><stop offset="0.0714" stop-color="#989898"/><stop offset="0.107" stop-color="#9a9a9a"/><stop offset="0.143" stop-color="#9c9c9c"/><stop offset="0.179" stop-color="#9f9f9f"/><stop offset="0.214" stop-color="#a1a1a1"/><stop offset="0.25" stop-color="#a2a2a2"/><stop offset="0.286" stop-color="#a0a0a0"/><stop offset="0.321" stop-color="#a1a1a1"/><stop offset="0.357" stop-color="#a5a5a5"/><stop offset="0.393" stop-color="#a8a8a8"/><stop offset="0.429" stop-color="#a7a7a7"/><stop offset="0.464" stop-color="#a4a4a4"/><stop offset="0.5" stop-color="#a1a1a1"/><stop offset="0.536" stop-color="#a0a0a0"/><stop offset="0.571" stop-color="#9f9f9f"/><stop offset="0.607" stop-color="#9e9e9e"/><stop offset="0.643" stop-color="#9c9c9c"/><stop offset="0.679" stop-color="#999999"/><stop offset="0.714" stop-color="#979797"/><stop offset="0.75" stop-color="#949494"/><stop offset="0.786" stop-color="#929292"/><stop offset="0.821" stop-color="#8f8f8f"/><stop offset="0.857" stop-color="#8d8d8d"/><stop offset="0.893" stop-color="#8c8c8c"/><stop offset="0.929" stop-color="#8a8a8a"/><stop offset="0.964" stop-color="#8a8a8a"/><stop offset="1" stop-color="#8b8b8b"/></linearGradient>
<linearGradient id="pg59" gradientUnits="userSpaceOnUse" x1="630" y1="0" x2="1190" y2="0"><stop offset="0" stop-color="#959595"/><stop offset="0.0357" stop-color="#979797"/><stop offset="0.0714" stop-color="#989898"/><stop offset="0.107" stop-color="#9a9a9a"/><stop offset="0.143" stop-color="#9c9c9c"/><stop offset="0.179" stop-color="#9e9e9e"/><stop offset="0.214" stop-color="#9f9f9f"/><stop offset="0.25" stop-color="#a0a0a0"/><stop offset="0.286" stop-color="#9f9f9f"/><stop offset="0.321" stop-color="#a0a0a0"/><stop offset="0.357" stop-color="#a6a6a6"/><stop offset="0.393" stop-color="#ababab"/><stop offset="0.429" stop-color="#a9a9a9"/><stop offset="0.464" stop-color="#a6a6a6"/><stop offset="0.5" stop-color="#a4a4a4"/><stop offset="0.536" stop-color="#a4a4a4"/><stop offset="0.571" stop-color="#a3a3a3"/><stop offset="0.607" stop-color="#a1a1a1"/><stop offset="0.643" stop-color="#9f9f9f"/><stop offset="0.679" stop-color="#9e9e9e"/><stop offset="0.714" stop-color="#9b9b9b"/><stop offset="0.75" stop-color="#979797"/><stop offset="0.786" stop-color="#949494"/><stop offset="0.821" stop-color="#919191"/><stop offset="0.857" stop-color="#909090"/><stop offset="0.893" stop-color="#8f8f8f"/><stop offset="0.929" stop-color="#8e8e8e"/><stop offset="0.964" stop-color="#8e8e8e"/><stop offset="1" stop-color="#8e8e8e"/></linearGradient>
<linearGradient id="pg60" gradientUnits="userSpaceOnUse" x1="630" y1="0" x2="1190" y2="0"><stop offset="0" stop-color="#959595"/><stop offset="0.0357" stop-color="#979797"/><stop offset="0.0714" stop-color="#989898"/><stop offset="0.107" stop-color="#9a9a9a"/><stop offset="0.143" stop-color="#9b9b9b"/><stop offset="0.179" stop-color="#9d9d9d"/><stop offset="0.214" stop-color="#9e9e9e"/><stop offset="0.25" stop-color="#9d9d9d"/><stop offset="0.286" stop-color="#9c9c9c"/><stop offset="0.321" stop-color="#9e9e9e"/><stop offset="0.357" stop-color="#a5a5a5"/><stop offset="0.393" stop-color="#aaaaaa"/><stop offset="0.429" stop-color="#aaaaaa"/><stop offset="0.464" stop-color="#a8a8a8"/><stop offset="0.5" stop-color="#a7a7a7"/><stop offset="0.536" stop-color="#a8a8a8"/><stop offset="0.571" stop-color="#a7a7a7"/><stop offset="0.607" stop-color="#a4a4a4"/><stop offset="0.643" stop-color="#a2a2a2"/><stop offset="0.679" stop-color="#a1a1a1"/><stop offset="0.714" stop-color="#9e9e9e"/><stop offset="0.75" stop-color="#9a9a9a"/><stop offset="0.786" stop-color="#959595"/><stop offset="0.821" stop-color="#939393"/><stop offset="0.857" stop-color="#929292"/><stop offset="0.893" stop-color="#919191"/><stop offset="0.929" stop-color="#919191"/><stop offset="0.964" stop-color="#919191"/><stop offset="1" stop-color="#919191"/></linearGradient>
<linearGradient id="pg61" gradientUnits="userSpaceOnUse" x1="630" y1="0" x2="1190" y2="0"><stop offset="0" stop-color="#959595"/><stop offset="0.0357" stop-color="#969696"/><stop offset="0.0714" stop-color="#989898"/><stop offset="0.107" stop-color="#999999"/><stop offset="0.143" stop-color="#9b9b9b"/><stop offset="0.179" stop-color="#9c9c9c"/><stop offset="0.214" stop-color="#9c9c9c"/><stop offset="0.25" stop-color="#9b9b9b"/><stop offset="0.286" stop-color="#9a9a9a"/><stop offset="0.321" stop-color="#9c9c9c"/><stop offset="0.357" stop-color="#a3a3a3"/><stop offset="0.393" stop-color="#a9a9a9"/><stop offset="0.429" stop-color="#aaaaaa"/><stop offset="0.464" stop-color="#a9a9a9"/><stop offset="0.5" stop-color="#a9a9a9"/><stop offset="0.536" stop-color="#aaaaaa"/><stop offset="0.571" stop-color="#a9a9a9"/><stop offset="0.607" stop-color="#a6a6a6"/><stop offset="0.643" stop-color="#a4a4a4"/><stop offset="0.679" stop-color="#a3a3a3"/><stop offset="0.714" stop-color="#a0a0a0"/><stop offset="0.75" stop-color="#9b9b9b"/><stop offset="0.786" stop-color="#979797"/><stop offset="0.821" stop-color="#959595"/><stop offset="0.857" stop-color="#949494"/><stop offset="0.893" stop-color="#939393"/><stop offset="0.929" stop-color="#939393"/><stop offset="0.964" stop-color="#939393"/><stop offset="1" stop-color="#949494"/></linearGradient>
<linearGradient id="pg62" gradientUnits="userSpaceOnUse" x1="630" y1="0" x2="1190" y2="0"><stop offset="0" stop-color="#959595"/><stop offset="0.0357" stop-color="#969696"/><stop offset="0.0714" stop-color="#989898"/><stop offset="0.107" stop-color="#999999"/><stop offset="0.143" stop-color="#9a9a9a"/><stop offset="0.179" stop-color="#9a9a9a"/><stop offset="0.214" stop-color="#9a9a9a"/><stop offset="0.25" stop-color="#999999"/><stop offset="0.286" stop-color="#989898"/><stop offset="0.321" stop-color="#9b9b9b"/><stop offset="0.357" stop-color="#a2a2a2"/><stop offset="0.393" stop-color="#a7a7a7"/><stop offset="0.429" stop-color="#a9a9a9"/><stop offset="0.464" stop-color="#a9a9a9"/><stop offset="0.5" stop-color="#aaaaaa"/><stop offset="0.536" stop-color="#ababab"/><stop offset="0.571" stop-color="#aaaaaa"/><stop offset="0.607" stop-color="#a7a7a7"/><stop offset="0.643" stop-color="#a5a5a5"/><stop offset="0.679" stop-color="#a3a3a3"/><stop offset="0.714" stop-color="#a0a0a0"/><stop offset="0.75" stop-color="#9c9c9c"/><stop offset="0.786" stop-color="#989898"/><stop offset="0.821" stop-color="#969696"/><stop offset="0.857" stop-color="#959595"/><stop offset="0.893" stop-color="#959595"/><stop offset="0.929" stop-color="#959595"/><stop offset="0.964" stop-color="#959595"/><stop offset="1" stop-color="#969696"/></linearGradient>
<linearGradient id="pg63" gradientUnits="userSpaceOnUse" x1="630" y1="0" x2="1190" y2="0"><stop offset="0" stop-color="#959595"/><stop offset="0.0357" stop-color="#969696"/><stop offset="0.0714" stop-color="#979797"/><stop offset="0.107" stop-color="#989898"/><stop offset="0.143" stop-color="#999999"/><stop offset="0.179" stop-color="#999999"/><stop offset="0.214" stop-color="#999999"/><stop offset="0.25" stop-color="#989898"/><stop offset="0.286" stop-color="#979797"/><stop offset="0.321" stop-color="#9a9a9a"/><stop offset="0.357" stop-color="#a0a0a0"/><stop offset="0.393" stop-color="#a5a5a5"/><stop offset="0.429" stop-color="#a7a7a7"/><stop offset="0.464" stop-color="#a8a8a8"/><stop offset="0.5" stop-color="#aaaaaa"/><stop offset="0.536" stop-color="#aaaaaa"/><stop offset="0.571" stop-color="#a9a9a9"/><stop offset="0.607" stop-color="#a7a7a7"/><stop offset="0.643" stop-color="#a4a4a4"/><stop offset="0.679" stop-color="#a2a2a2"/><stop offset="0.714" stop-color="#a0a0a0"/><stop offset="0.75" stop-color="#9c9c9c"/><stop offset="0.786" stop-color="#999999"/><stop offset="0.821" stop-color="#989898"/><stop offset="0.857" stop-color="#979797"/><stop offset="0.893" stop-color="#979797"/><stop offset="0.929" stop-color="#979797"/><stop offset="0.964" stop-color="#979797"/><stop offset="1" stop-color="#989898"/></linearGradient>
<linearGradient id="pg64" gradientUnits="userSpaceOnUse" x1="630" y1="0" x2="1190" y2="0"><stop offset="0" stop-color="#949494"/><stop offset="0.0357" stop-color="#969696"/><stop offset="0.0714" stop-color="#979797"/><stop offset="0.107" stop-color="#989898"/><stop offset="0.143" stop-color="#989898"/><stop offset="0.179" stop-color="#989898"/><stop offset="0.214" stop-color="#989898"/><stop offset="0.25" stop-color="#979797"/><stop offset="0.286" stop-color="#979797"/><stop offset="0.321" stop-color="#9a9a9a"/><stop offset="0.357" stop-color="#9f9f9f"/><stop offset="0.393" stop-color="#a4a4a4"/><stop offset="0.429" stop-color="#a6a6a6"/><stop offset="0.464" stop-color="#a8a8a8"/><stop offset="0.5" stop-color="#a9a9a9"/><stop offset="0.536" stop-color="#aaaaaa"/><stop offset="0.571" stop-color="#a8a8a8"/><stop offset="0.607" stop-color="#a6a6a6"/><stop offset="0.643" stop-color="#a3a3a3"/><stop offset="0.679" stop-color="#a1a1a1"/><stop offset="0.714" stop-color="#9f9f9f"/><stop offset="0.75" stop-color="#9c9c9c"/><stop offset="0.786" stop-color="#9a9a9a"/><stop offset="0.821" stop-color="#999999"/><stop offset="0.857" stop-color="#989898"/><stop offset="0.893" stop-color="#989898"/><stop offset="0.929" stop-color="#989898"/><stop offset="0.964" stop-color="#999999"/><stop offset="1" stop-color="#999999"/></linearGradient>
<linearGradient id="pg65" gradientUnits="userSpaceOnUse" x1="630" y1="0" x2="1190" y2="0"><stop offset="0" stop-color="#949494"/><stop offset="0.0357" stop-color="#959595"/><stop offset="0.0714" stop-color="#969696"/><stop offset="0.107" stop-color="#979797"/><stop offset="0.143" stop-color="#979797"/><stop offset="0.179" stop-color="#979797"/><stop offset="0.214" stop-color="#979797"/><stop offset="0.25" stop-color="#979797"/><stop offset="0.286" stop-color="#989898"/><stop offset="0.321" stop-color="#9a9a9a"/><stop offset="0.357" stop-color="#9e9e9e"/><stop offset="0.393" stop-color="#a2a2a2"/><stop offset="0.429" stop-color="#a5a5a5"/><stop offset="0.464" stop-color="#a7a7a7"/><stop offset="0.5" stop-color="#a8a8a8"/><stop offset="0.536" stop-color="#a8a8a8"/><stop offset="0.571" stop-color="#a7a7a7"/><stop offset="0.607" stop-color="#a4a4a4"/><stop offset="0.643" stop-color="#a1a1a1"/><stop offset="0.679" stop-color="#9f9f9f"/><stop offset="0.714" stop-color="#9e9e9e"/><stop offset="0.75" stop-color="#9c9c9c"/><stop offset="0.786" stop-color="#9b9b9b"/><stop offset="0.821" stop-color="#9a9a9a"/><stop offset="0.857" stop-color="#999999"/><stop offset="0.893" stop-color="#999999"/><stop offset="0.929" stop-color="#9a9a9a"/><stop offset="0.964" stop-color="#9a9a9a"/><stop offset="1" stop-color="#9b9b9b"/></linearGradient>
</defs>
<g id="pbody" clip-path="url(#pclip)"><g filter="url(#pf)">
<rect x="630" y="295" width="560" height="10" fill="url(#pg0)"/>
<rect x="630" y="305" width="560" height="10" fill="url(#pg1)"/>
<rect x="630" y="315" width="560" height="10" fill="url(#pg2)"/>
<rect x="630" y="325" width="560" height="10" fill="url(#pg3)"/>
<rect x="630" y="335" width="560" height="10" fill="url(#pg4)"/>
<rect x="630" y="345" width="560" height="10" fill="url(#pg5)"/>
<rect x="630" y="355" width="560" height="10" fill="url(#pg6)"/>
<rect x="630" y="365" width="560" height="10" fill="url(#pg7)"/>
<rect x="630" y="375" width="560" height="10" fill="url(#pg8)"/>
<rect x="630" y="385" width="560" height="10" fill="url(#pg9)"/>
<rect x="630" y="395" width="560" height="10" fill="url(#pg10)"/>
<rect x="630" y="405" width="560" height="10" fill="url(#pg11)"/>
<rect x="630" y="415" width="560" height="10" fill="url(#pg12)"/>
<rect x="630" y="425" width="560" height="10" fill="url(#pg13)"/>
<rect x="630" y="435" width="560" height="10" fill="url(#pg14)"/>
<rect x="630" y="445" width="560" height="10" fill="url(#pg15)"/>
<rect x="630" y="455" width="560" height="10" fill="url(#pg16)"/>
<rect x="630" y="465" width="560" height="10" fill="url(#pg17)"/>
<rect x="630" y="475" width="560" height="10" fill="url(#pg18)"/>
<rect x="630" y="485" width="560" height="10" fill="url(#pg19)"/>
<rect x="630" y="495" width="560" height="10" fill="url(#pg20)"/>
<rect x="630" y="505" width="560" height="10" fill="url(#pg21)"/>
<rect x="630" y="515" width="560" height="10" fill="url(#pg22)"/>
<rect x="630" y="525" width="560" height="10" fill="url(#pg23)"/>
<rect x="630" y="535" width="560" height="10" fill="url(#pg24)"/>
<rect x="630" y="545" width="560" height="10" fill="url(#pg25)"/>
<rect x="630" y="555" width="560" height="10" fill="url(#pg26)"/>
<rect x="630" y="565" width="560" height="10" fill="url(#pg27)"/>
<rect x="630" y="575" width="560" height="10" fill="url(#pg28)"/>
<rect x="630" y="585" width="560" height="10" fill="url(#pg29)"/>
<rect x="630" y="595" width="560" height="10" fill="url(#pg30)"/>
<rect x="630" y="605" width="560" height="10" fill="url(#pg31)"/>
<rect x="630" y="615" width="560" height="10" fill="url(#pg32)"/>
<rect x="630" y="625" width="560" height="10" fill="url(#pg33)"/>
<rect x="630" y="635" width="560" height="10" fill="url(#pg34)"/>
<rect x="630" y="645" width="560" height="10" fill="url(#pg35)"/>
<rect x="630" y="655" width="560" height="10" fill="url(#pg36)"/>
<rect x="630" y="665" width="560" height="10" fill="url(#pg37)"/>
<rect x="630" y="675" width="560" height="10" fill="url(#pg38)"/>
<rect x="630" y="685" width="560" height="10" fill="url(#pg39)"/>
<rect x="630" y="695" width="560" height="10" fill="url(#pg40)"/>
<rect x="630" y="705" width="560" height="10" fill="url(#pg41)"/>
<rect x="630" y="715" width="560" height="10" fill="url(#pg42)"/>
<rect x="630" y="725" width="560" height="10" fill="url(#pg43)"/>
<rect x="630" y="735" width="560" height="10" fill="url(#pg44)"/>
<rect x="630" y="745" width="560" height="10" fill="url(#pg45)"/>
<rect x="630" y="755" width="560" height="10" fill="url(#pg46)"/>
<rect x="630" y="765" width="560" height="10" fill="url(#pg47)"/>
<rect x="630" y="775" width="560" height="10" fill="url(#pg48)"/>
<rect x="630" y="785" width="560" height="10" fill="url(#pg49)"/>
<rect x="630" y="795" width="560" height="10" fill="url(#pg50)"/>
<rect x="630" y="805" width="560" height="10" fill="url(#pg51)"/>
<rect x="630" y="815" width="560" height="10" fill="url(#pg52)"/>
<rect x="630" y="825" width="560" height="10" fill="url(#pg53)"/>
<rect x="630" y="835" width="560" height="10" fill="url(#pg54)"/>
<rect x="630" y="845" width="560" height="10" fill="url(#pg55)"/>
<rect x="630" y="855" width="560" height="10" fill="url(#pg56)"/>
<rect x="630" y="865" width="560" height="10" fill="url(#pg57)"/>
<rect x="630" y="875" width="560" height="10" fill="url(#pg58)"/>
<rect x="630" y="885" width="560" height="10" fill="url(#pg59)"/>
<rect x="630" y="895" width="560" height="10" fill="url(#pg60)"/>
<rect x="630" y="905" width="560" height="10" fill="url(#pg61)"/>
<rect x="630" y="915" width="560" height="10" fill="url(#pg62)"/>
<rect x="630" y="925" width="560" height="10" fill="url(#pg63)"/>
<rect x="630" y="935" width="560" height="10" fill="url(#pg64)"/>
<rect x="630" y="945" width="560" height="10" fill="url(#pg65)"/>
<path d="M640.0 700.0 L664.0 724.0 L721.0 759.0 L782.0 787.0 L815.0 799.0 L839.0 808.0 L862.0 823.0 L921.0 832.0 L957.0 827.0 L1010.0 808.0 L1060.0 815.0 L1060.0 870.0 L1010.0 870.0 L980.0 860.0 L933.0 853.0 L886.0 853.0 L846.0 856.0 L803.0 851.0 L756.0 834.0 L704.0 813.0 L640.0 780.0 Z" fill="#909090"/>
<path d="M715.0 800.0 L760.0 815.0 L800.0 832.0 L835.0 842.0 L800.0 846.0 L750.0 830.0 L710.0 814.0 Z" fill="#999999"/>
<path d="M880.0 868.0 L950.0 872.0 L1010.0 878.0 L1060.0 885.0 L1060.0 900.0 L1000.0 895.0 L930.0 885.0 L880.0 878.0 Z" fill="#949494"/>
<path d="M1099.6 912.2 L1091.3 916.1 L1082.9 919.7 L1074.4 923.0 L1065.8 926.1 L1057.1 929.0 L1048.4 931.6 L1039.6 934.0 L1030.7 936.1 L1021.7 938.0 L1012.7 939.6 L1003.7 941.0 L994.6 942.1 L985.5 942.9 L976.4 943.5 L967.3 943.9 L958.1 943.9 L949.0 943.7 L939.9 943.3 L930.8 942.6 L921.7 941.6 L912.7 940.4 L903.7 939.0 L894.7 937.2 L885.8 935.3 L876.9 933.0 L868.2 930.6 L859.5 927.8 L850.8 924.9 L842.3 921.6 L833.9 918.2 L825.6 914.5 L817.3 910.6 L809.2 906.4 L801.2 902.0 L793.4 897.4 L785.7 892.6 L778.1 887.5 L770.7 882.3 L763.4 876.8 L756.3 871.1 L749.3 865.2 L742.6 859.2 L736.0 852.9 L729.6 846.5 L723.3 839.8 L717.3 833.0 L711.5 826.1 L705.8 818.9 L700.4 811.6 L695.2 804.2 L690.2 796.6 L685.4 788.9 L680.8 781.0 L676.5 773.0 L672.4 764.9 L668.5 756.7 L664.8 748.4 L661.4 739.9 L658.3 731.4 L655.4 722.8 L652.7 714.1 L650.3 705.3 L648.1 696.5 L646.2 687.6 L644.6 678.7 L643.2 669.7 L642.0 660.7 L641.1 651.6 L640.5 642.5 L640.1 633.5 L640.0 624.4 L640.2 615.3 L640.6 606.2 L641.3 597.1 L642.2 588.0 L643.4 579.0 L644.8 570.0 L646.5 561.0 L648.5 552.1 L650.7 543.3 L653.1 534.5 L655.8 525.8 L658.8 517.2 L662.0 508.7 L665.4 500.2 L669.1 491.9 L673.0 483.6 L677.1 475.5 L681.5 467.5 L686.1 459.6 L690.9 451.8 L696.0 444.2 L701.2 436.8 L706.7 429.4 L712.4 422.3 L718.2 415.3 L724.3 408.4 L730.6 401.8 L737.0 395.3 L743.6 389.0 L750.4 382.9 L757.4 377.0 L764.5 371.3 L771.8 365.8 L779.3 360.5 L786.9 355.4 L794.6 350.5 L802.5 345.9 L810.5 341.4 L818.6 337.2 L826.9 333.3 L835.2 329.5 L843.7 326.0 L852.2 322.8 L860.8 319.8 L869.6 317.0 L878.3 314.5 L887.2 312.2 L896.1 310.2 L905.1 308.4" fill="none" stroke="#787878" stroke-opacity="0.7" stroke-width="12"/>
<path d="M640.1 633.5 L640.0 624.4 L640.2 615.3 L640.6 606.2 L641.3 597.1 L642.2 588.0 L643.4 579.0 L644.8 570.0 L646.5 561.0 L648.5 552.1 L650.7 543.3 L653.1 534.5 L655.8 525.8 L658.8 517.2 L662.0 508.7 L665.4 500.2 L669.1 491.9 L673.0 483.6 L677.1 475.5 L681.5 467.5 L686.1 459.6 L690.9 451.8 L696.0 444.2" fill="none" stroke="#787878" stroke-opacity="0.45" stroke-width="34" stroke-linecap="round"/>
</g>
<g><ellipse cx="908" cy="540" rx="7.1" ry="4.9" transform="rotate(-22 908 540)" fill="#e07018" fill-opacity="0.2" stroke="#f08820" stroke-opacity="0.25" stroke-width="1.5"/><ellipse cx="1028" cy="541" rx="8.0" ry="6.1" transform="rotate(29 1028 541)" fill="#902800" fill-opacity="0.28"/><ellipse cx="981" cy="528" rx="5.4" ry="4.2" transform="rotate(-16 981 528)" fill="#e07018" fill-opacity="0.2" stroke="#f08820" stroke-opacity="0.25" stroke-width="1.5"/><ellipse cx="947" cy="435" rx="4.0" ry="3.4" transform="rotate(-4 947 435)" fill="#902800" fill-opacity="0.28"/><ellipse cx="898" cy="521" rx="8.5" ry="6.9" transform="rotate(-10 898 521)" fill="#902800" fill-opacity="0.28"/><ellipse cx="944" cy="621" rx="3.8" ry="2.3" transform="rotate(21 944 621)" fill="#e07018" fill-opacity="0.2" stroke="#f08820" stroke-opacity="0.25" stroke-width="1.5"/><ellipse cx="883" cy="453" rx="4.0" ry="2.6" transform="rotate(-29 883 453)" fill="#e07018" fill-opacity="0.2" stroke="#f08820" stroke-opacity="0.25" stroke-width="1.5"/><ellipse cx="947" cy="367" rx="7.6" ry="5.0" transform="rotate(-26 947 367)" fill="#e07018" fill-opacity="0.2" stroke="#f08820" stroke-opacity="0.25" stroke-width="1.5"/><ellipse cx="847" cy="452" rx="4.9" ry="4.4" transform="rotate(26 847 452)" fill="#902800" fill-opacity="0.28"/><ellipse cx="934" cy="451" rx="7.6" ry="4.7" transform="rotate(-26 934 451)" fill="#902800" fill-opacity="0.28"/><ellipse cx="1057" cy="556" rx="7.1" ry="5.8" transform="rotate(17 1057 556)" fill="#e07018" fill-opacity="0.2" stroke="#f08820" stroke-opacity="0.25" stroke-width="1.5"/><ellipse cx="817" cy="509" rx="7.8" ry="6.8" transform="rotate(16 817 509)" fill="#902800" fill-opacity="0.28"/><ellipse cx="904" cy="383" rx="9.0" ry="5.8" transform="rotate(-15 904 383)" fill="#902800" fill-opacity="0.28"/><ellipse cx="982" cy="597" rx="5.3" ry="4.2" transform="rotate(-9 982 597)" fill="#902800" fill-opacity="0.28"/><ellipse cx="886" cy="488" rx="8.5" ry="5.4" transform="rotate(-25 886 488)" fill="#e07018" fill-opacity="0.2" stroke="#f08820" stroke-opacity="0.25" stroke-width="1.5"/><ellipse cx="1145" cy="718" rx="7.4" ry="4.6" transform="rotate(18 1145 718)" fill="#e07018" fill-opacity="0.2" stroke="#f08820" stroke-opacity="0.25" stroke-width="1.5"/><ellipse cx="818" cy="519" rx="3.8" ry="3.2" transform="rotate(13 818 519)" fill="#e07018" fill-opacity="0.2" stroke="#f08820" stroke-opacity="0.25" stroke-width="1.5"/><ellipse cx="815" cy="486" rx="6.2" ry="4.3" transform="rotate(6 815 486)" fill="#e07018" fill-opacity="0.2" stroke="#f08820" stroke-opacity="0.25" stroke-width="1.5"/><ellipse cx="926" cy="559" rx="7.2" ry="5.4" transform="rotate(-15 926 559)" fill="#e07018" fill-opacity="0.2" stroke="#f08820" stroke-opacity="0.25" stroke-width="1.5"/><ellipse cx="798" cy="456" rx="6.5" ry="4.0" transform="rotate(-21 798 456)" fill="#e07018" fill-opacity="0.2" stroke="#f08820" stroke-opacity="0.25" stroke-width="1.5"/><ellipse cx="1074" cy="597" rx="8.5" ry="7.0" transform="rotate(-12 1074 597)" fill="#e07018" fill-opacity="0.2" stroke="#f08820" stroke-opacity="0.25" stroke-width="1.5"/><ellipse cx="914" cy="379" rx="8.3" ry="6.7" transform="rotate(15 914 379)" fill="#e07018" fill-opacity="0.2" stroke="#f08820" stroke-opacity="0.25" stroke-width="1.5"/><ellipse cx="982" cy="677" rx="7.4" ry="6.2" transform="rotate(-0 982 677)" fill="#e07018" fill-opacity="0.2" stroke="#f08820" stroke-opacity="0.25" stroke-width="1.5"/><ellipse cx="909" cy="351" rx="6.9" ry="5.1" transform="rotate(-4 909 351)" fill="#e07018" fill-opacity="0.2" stroke="#f08820" stroke-opacity="0.25" stroke-width="1.5"/><ellipse cx="926" cy="548" rx="6.2" ry="4.0" transform="rotate(1 926 548)" fill="#e07018" fill-opacity="0.2" stroke="#f08820" stroke-opacity="0.25" stroke-width="1.5"/><ellipse cx="787" cy="517" rx="8.9" ry="5.4" transform="rotate(29 787 517)" fill="#902800" fill-opacity="0.28"/><ellipse cx="808" cy="498" rx="4.6" ry="3.8" transform="rotate(2 808 498)" fill="#902800" fill-opacity="0.28"/><ellipse cx="824" cy="473" rx="6.3" ry="3.9" transform="rotate(-27 824 473)" fill="#902800" fill-opacity="0.28"/><ellipse cx="1110" cy="722" rx="5.5" ry="4.8" transform="rotate(26 1110 722)" fill="#902800" fill-opacity="0.28"/><ellipse cx="1084" cy="722" rx="6.0" ry="3.8" transform="rotate(24 1084 722)" fill="#e07018" fill-opacity="0.2" stroke="#f08820" stroke-opacity="0.25" stroke-width="1.5"/><ellipse cx="1029" cy="478" rx="4.5" ry="3.1" transform="rotate(13 1029 478)" fill="#902800" fill-opacity="0.28"/><ellipse cx="1037" cy="536" rx="6.0" ry="5.3" transform="rotate(-20 1037 536)" fill="#902800" fill-opacity="0.28"/><ellipse cx="955" cy="459" rx="4.4" ry="3.4" transform="rotate(-6 955 459)" fill="#902800" fill-opacity="0.28"/><ellipse cx="773" cy="486" rx="6.7" ry="5.1" transform="rotate(24 773 486)" fill="#e07018" fill-opacity="0.2" stroke="#f08820" stroke-opacity="0.25" stroke-width="1.5"/><ellipse cx="1135" cy="670" rx="6.1" ry="4.6" transform="rotate(-6 1135 670)" fill="#902800" fill-opacity="0.28"/><ellipse cx="858" cy="323" rx="6.1" ry="4.9" transform="rotate(-4 858 323)" fill="#902800" fill-opacity="0.28"/><ellipse cx="910" cy="462" rx="6.6" ry="5.7" transform="rotate(-8 910 462)" fill="#902800" fill-opacity="0.28"/><ellipse cx="914" cy="453" rx="5.6" ry="3.5" transform="rotate(3 914 453)" fill="#e07018" fill-opacity="0.2" stroke="#f08820" stroke-opacity="0.25" stroke-width="1.5"/><ellipse cx="1060" cy="741" rx="5.5" ry="4.3" transform="rotate(-3 1060 741)" fill="#902800" fill-opacity="0.28"/><ellipse cx="1116" cy="646" rx="8.7" ry="7.4" transform="rotate(25 1116 646)" fill="#902800" fill-opacity="0.28"/><ellipse cx="925" cy="619" rx="5.9" ry="4.5" transform="rotate(16 925 619)" fill="#902800" fill-opacity="0.28"/><ellipse cx="1033" cy="492" rx="5.1" ry="4.3" transform="rotate(-14 1033 492)" fill="#902800" fill-opacity="0.28"/><ellipse cx="859" cy="320" rx="8.0" ry="5.1" transform="rotate(28 859 320)" fill="#902800" fill-opacity="0.28"/><ellipse cx="882" cy="573" rx="5.2" ry="3.7" transform="rotate(-24 882 573)" fill="#902800" fill-opacity="0.28"/><ellipse cx="1077" cy="586" rx="4.5" ry="2.9" transform="rotate(15 1077 586)" fill="#e07018" fill-opacity="0.2" stroke="#f08820" stroke-opacity="0.25" stroke-width="1.5"/><ellipse cx="1119" cy="661" rx="5.8" ry="3.7" transform="rotate(23 1119 661)" fill="#e07018" fill-opacity="0.2" stroke="#f08820" stroke-opacity="0.25" stroke-width="1.5"/><ellipse cx="991" cy="617" rx="5.6" ry="3.9" transform="rotate(5 991 617)" fill="#902800" fill-opacity="0.28"/><ellipse cx="797" cy="513" rx="6.3" ry="5.3" transform="rotate(23 797 513)" fill="#902800" fill-opacity="0.28"/><ellipse cx="1007" cy="593" rx="4.3" ry="3.7" transform="rotate(3 1007 593)" fill="#e07018" fill-opacity="0.2" stroke="#f08820" stroke-opacity="0.25" stroke-width="1.5"/><ellipse cx="835" cy="546" rx="5.3" ry="4.2" transform="rotate(6 835 546)" fill="#902800" fill-opacity="0.28"/><ellipse cx="890" cy="537" rx="5.5" ry="4.8" transform="rotate(-2 890 537)" fill="#902800" fill-opacity="0.28"/><ellipse cx="863" cy="424" rx="8.7" ry="6.1" transform="rotate(22 863 424)" fill="#e07018" fill-opacity="0.2" stroke="#f08820" stroke-opacity="0.25" stroke-width="1.5"/><ellipse cx="1137" cy="658" rx="6.6" ry="5.4" transform="rotate(13 1137 658)" fill="#902800" fill-opacity="0.28"/><ellipse cx="1155" cy="714" rx="8.8" ry="5.7" transform="rotate(-20 1155 714)" fill="#902800" fill-opacity="0.28"/><ellipse cx="905" cy="362" rx="4.3" ry="2.6" transform="rotate(26 905 362)" fill="#902800" fill-opacity="0.28"/><ellipse cx="1010" cy="515" rx="7.6" ry="6.4" transform="rotate(-7 1010 515)" fill="#902800" fill-opacity="0.28"/><ellipse cx="799" cy="438" rx="4.7" ry="3.3" transform="rotate(-11 799 438)" fill="#e07018" fill-opacity="0.2" stroke="#f08820" stroke-opacity="0.25" stroke-width="1.5"/><ellipse cx="893" cy="457" rx="8.1" ry="4.9" transform="rotate(-30 893 457)" fill="#902800" fill-opacity="0.28"/><ellipse cx="1106" cy="595" rx="7.5" ry="6.7" transform="rotate(-17 1106 595)" fill="#e07018" fill-opacity="0.2" stroke="#f08820" stroke-opacity="0.25" stroke-width="1.5"/><ellipse cx="857" cy="543" rx="7.2" ry="6.1" transform="rotate(-15 857 543)" fill="#902800" fill-opacity="0.28"/><ellipse cx="778" cy="440" rx="8.9" ry="7.8" transform="rotate(5 778 440)" fill="#e07018" fill-opacity="0.2" stroke="#f08820" stroke-opacity="0.25" stroke-width="1.5"/><ellipse cx="997" cy="622" rx="7.2" ry="4.4" transform="rotate(8 997 622)" fill="#e07018" fill-opacity="0.2" stroke="#f08820" stroke-opacity="0.25" stroke-width="1.5"/><ellipse cx="888" cy="591" rx="8.2" ry="6.6" transform="rotate(7 888 591)" fill="#e07018" fill-opacity="0.2" stroke="#f08820" stroke-opacity="0.25" stroke-width="1.5"/><ellipse cx="803" cy="512" rx="6.1" ry="4.5" transform="rotate(7 803 512)" fill="#902800" fill-opacity="0.28"/><ellipse cx="803" cy="467" rx="8.6" ry="5.6" transform="rotate(-13 803 467)" fill="#e07018" fill-opacity="0.2" stroke="#f08820" stroke-opacity="0.25" stroke-width="1.5"/><ellipse cx="855" cy="391" rx="7.6" ry="6.8" transform="rotate(28 855 391)" fill="#e07018" fill-opacity="0.2" stroke="#f08820" stroke-opacity="0.25" stroke-width="1.5"/><ellipse cx="1126" cy="754" rx="6.5" ry="4.2" transform="rotate(21 1126 754)" fill="#902800" fill-opacity="0.28"/><ellipse cx="885" cy="535" rx="3.7" ry="2.2" transform="rotate(-14 885 535)" fill="#e07018" fill-opacity="0.2" stroke="#f08820" stroke-opacity="0.25" stroke-width="1.5"/><ellipse cx="1060" cy="741" rx="8.0" ry="7.1" transform="rotate(8 1060 741)" fill="#e07018" fill-opacity="0.2" stroke="#f08820" stroke-opacity="0.25" stroke-width="1.5"/><ellipse cx="985" cy="509" rx="3.9" ry="2.6" transform="rotate(-12 985 509)" fill="#902800" fill-opacity="0.28"/></g>
<linearGradient id="prim" gradientUnits="userSpaceOnUse" x1="0" y1="650" x2="0" y2="912"><stop offset="0" stop-color="#e87018"/><stop offset="0.5" stop-color="#ffa838"/><stop offset="1" stop-color="#fff0a0"/></linearGradient>
<path d="M1150.8 646.6 L1155.5 649.6 L1160.0 678.8 L1162.8 706.0 L1165.4 740.0 L1165.0 760.0 L1163.8 784.0 L1160.0 817.0 L1152.3 847.7 L1142.7 870.8 L1135.0 883.0 L1124.0 896.0 L1099.6 912.2" fill="none" stroke="url(#prim)" stroke-width="9" stroke-opacity="0.85"/>
</g>
<path d="M1099.6 912.2 L1091.3 916.1 L1082.9 919.7 L1074.4 923.0 L1065.8 926.1 L1057.1 929.0 L1048.4 931.6 L1039.6 934.0 L1030.7 936.1 L1021.7 938.0 L1012.7 939.6 L1003.7 941.0 L994.6 942.1 L985.5 942.9 L976.4 943.5 L967.3 943.9 L958.1 943.9 L949.0 943.7 L939.9 943.3 L930.8 942.6 L921.7 941.6 L912.7 940.4 L903.7 939.0 L894.7 937.2 L885.8 935.3 L876.9 933.0 L868.2 930.6 L859.5 927.8 L850.8 924.9 L842.3 921.6 L833.9 918.2 L825.6 914.5 L817.3 910.6 L809.2 906.4 L801.2 902.0 L793.4 897.4 L785.7 892.6 L778.1 887.5 L770.7 882.3 L763.4 876.8 L756.3 871.1 L749.3 865.2 L742.6 859.2 L736.0 852.9 L729.6 846.5 L723.3 839.8 L717.3 833.0 L711.5 826.1 L705.8 818.9 L700.4 811.6 L695.2 804.2 L690.2 796.6 L685.4 788.9 L680.8 781.0 L676.5 773.0 L672.4 764.9 L668.5 756.7 L664.8 748.4 L661.4 739.9 L658.3 731.4 L655.4 722.8 L652.7 714.1 L650.3 705.3 L648.1 696.5 L646.2 687.6 L644.6 678.7 L643.2 669.7 L642.0 660.7 L641.1 651.6 L640.5 642.5 L640.1 633.5 L640.0 624.4 L640.2 615.3 L640.6 606.2 L641.3 597.1 L642.2 588.0 L643.4 579.0 L644.8 570.0 L646.5 561.0 L648.5 552.1 L650.7 543.3 L653.1 534.5 L655.8 525.8 L658.8 517.2 L662.0 508.7 L665.4 500.2 L669.1 491.9 L673.0 483.6 L677.1 475.5 L681.5 467.5 L686.1 459.6 L690.9 451.8 L696.0 444.2 L701.2 436.8 L706.7 429.4 L712.4 422.3 L718.2 415.3 L724.3 408.4 L730.6 401.8 L737.0 395.3 L743.6 389.0 L750.4 382.9 L757.4 377.0 L764.5 371.3 L771.8 365.8 L779.3 360.5 L786.9 355.4 L794.6 350.5 L802.5 345.9 L810.5 341.4 L818.6 337.2 L826.9 333.3 L835.2 329.5 L843.7 326.0 L852.2 322.8 L860.8 319.8 L869.6 317.0 L878.3 314.5 L887.2 312.2 L896.1 310.2 L905.1 308.4 L905.0 308.0 L926.0 349.8 L930.3 350.5 L944.7 382.3 L950.5 391.6 L953.4 391.6 L973.6 430.6 L977.9 430.6 L1000.0 467.0 L1003.0 467.4 L1024.7 503.5 L1028.3 503.5 L1052.2 539.6 L1056.5 539.6 L1081.5 573.7 L1085.2 573.7 L1113.3 609.8 L1116.2 609.8 L1145.0 643.7 L1149.4 643.7 L1150.8 646.6 L1155.5 649.6 L1160.0 678.8 L1162.8 706.0 L1165.4 740.0 L1165.0 760.0 L1163.8 784.0 L1160.0 817.0 L1152.3 847.7 L1142.7 870.8 L1135.0 883.0 L1124.0 896.0 L1099.6 912.2 Z" fill="none" stroke="#00ff00" stroke-width="1.2"/>
<path d="M1151.2 650.8 L1155.5 679.4 L1158.3 706.4 L1160.9 740.2 L1160.5 759.8 L1159.3 783.6 L1155.6 816.2 L1148.0 846.3 L1138.7 868.8 L1131.4 880.3 L1121.1 892.5 L1097.1 908.5" fill="none" stroke="#00ff00" stroke-width="1.2"/>
<path d="M1150.8 646.6 L1155.5 649.6 L1160.0 678.8 L1162.8 706.0 L1165.4 740.0 L1165.0 760.0 L1163.8 784.0 L1160.0 817.0 L1152.3 847.7 L1142.7 870.8 L1135.0 883.0 L1124.0 896.0 L1099.6 912.2" fill="none" stroke="#00ff00" stroke-width="2"/>
<path fill="none" stroke="#00ff00" stroke-width="1" shape-rendering="crispEdges" d="M772 399 771 398 771 396 773 395 772 394 767 393 769 390 773 391 776 388 776 384 772 379 773 377 777 377 780 382 783 385 779 387 779 390 777 393 779 396 778 397 777 397 774 396 772 399 M793 382 791 381 791 379 792 377 794 377 795 379 793 382 M818 381 818 381 M808 385 808 384 808 385 M812 387 811 385 812 384 813 385 812 387 M815 387 815 387 815 387 M768 390 765 389 766 388 769 389 768 390 M807 391 805 391 806 390 808 391 807 391 M761 410 758 409 753 410 749 407 753 399 757 396 758 394 762 396 764 399 763 403 770 403 771 405 771 406 769 406 763 407 761 410 M802 400 800 399 799 398 797 397 792 398 790 395 793 395 795 393 797 397 799 395 802 397 802 400 M823 401 819 400 819 398 821 398 823 401 M778 402 776 402 776 400 779 400 779 402 778 402 M797 403 794 403 795 399 798 401 798 402 797 403 M777 404 776 405 776 404 777 404 M730 410 730 408 730 410 M808 410 808 410 M755 415 753 414 752 413 754 411 758 413 755 415 M831 414 831 414 M781 451 776 449 774 446 774 443 772 442 771 439 773 437 770 436 769 432 765 431 763 427 759 425 758 424 752 426 745 424 744 423 741 421 741 419 744 420 745 417 746 417 747 422 749 423 752 421 751 419 750 419 750 418 748 416 749 415 756 416 759 416 760 415 765 419 762 420 762 423 763 423 765 421 771 423 774 424 776 423 777 424 776 425 780 426 781 428 784 427 787 430 789 428 788 427 781 424 780 421 781 420 782 419 784 423 786 424 787 422 786 419 787 418 790 418 792 416 798 418 800 417 801 420 800 422 802 424 798 427 800 431 795 431 795 429 794 429 794 434 791 435 790 439 789 440 787 439 786 439 787 440 788 440 788 443 787 444 785 443 783 445 783 447 784 449 781 451 M783 420 782 419 784 417 785 418 783 420 M729 431 728 429 730 425 730 429 729 431 M774 429 776 426 772 426 770 424 766 425 771 429 774 429 M808 426 806 425 808 425 808 426 M760 431 759 432 757 429 755 429 755 427 757 429 760 429 760 431 M806 432 804 431 804 428 806 430 806 432 M780 430 780 429 778 430 780 430 M812 435 811 436 810 435 809 432 810 430 812 431 812 435 M788 433 788 431 787 430 786 432 785 431 784 432 785 431 787 433 788 433 M762 435 761 435 762 434 762 435 M805 439 803 437 801 436 806 433 807 436 805 439 M820 435 819 435 819 433 821 435 820 435 M755 442 754 442 754 440 756 438 757 438 755 442 M817 446 815 446 813 441 813 438 817 437 818 441 819 442 820 443 817 446 M710 443 709 443 709 441 710 441 710 443 M803 450 801 449 801 446 800 444 802 442 806 447 803 450 M811 444 810 444 810 442 812 441 813 442 811 444 M756 446 754 446 755 443 757 445 757 446 756 446 M771 444 770 444 770 443 772 443 771 444 M725 445 724 445 726 445 725 445 M713 446 713 445 714 446 713 446 M764 463 763 463 764 460 761 460 761 459 761 456 760 454 761 452 758 449 758 447 760 446 761 446 761 449 764 452 764 454 765 455 766 455 767 453 770 452 770 450 771 450 771 453 769 457 768 458 767 456 766 460 764 463 M747 448 745 448 747 448 M812 448 811 449 811 448 812 448 M724 451 722 450 723 449 724 449 725 450 724 451 M744 449 744 449 M984 943 936 943 935 942 926 942 925 941 917 941 916 940 910 940 909 939 899 938 898 937 894 937 889 935 885 935 884 934 877 933 863 928 860 928 857 926 846 923 843 921 836 919 816 908 813 908 807 904 801 901 792 894 785 891 783 888 772 883 756 868 746 862 746 860 741 857 737 851 734 850 732 847 730 845 724 836 717 829 713 822 706 816 700 807 700 804 695 800 692 795 685 779 684 776 682 772 682 770 679 768 679 765 678 763 678 760 670 747 670 746 672 745 668 739 668 734 667 732 663 724 662 724 662 721 658 718 659 715 659 714 656 714 654 701 650 695 651 691 650 685 649 683 649 679 647 677 644 667 645 664 643 658 643 648 644 643 643 640 644 633 642 630 642 624 645 600 646 597 646 589 647 575 652 568 652 565 656 550 655 545 659 541 661 528 664 522 665 517 670 511 674 510 676 508 676 505 681 492 687 491 685 485 681 486 681 484 682 481 686 481 690 478 691 476 688 473 695 468 696 469 697 472 695 474 693 478 693 482 694 482 694 479 698 475 698 473 700 472 698 468 701 467 703 469 704 467 707 467 706 463 712 461 713 457 715 457 715 459 717 459 721 457 723 457 725 452 726 451 732 455 733 455 733 453 735 455 738 455 737 459 733 462 731 461 728 463 726 466 722 468 723 471 726 470 727 473 729 474 733 474 737 474 740 475 743 474 747 475 747 477 745 476 743 478 737 477 736 479 733 481 733 482 737 484 739 488 746 486 748 486 750 488 752 483 754 482 757 484 756 489 754 490 753 493 750 497 752 498 752 501 757 500 759 501 758 504 760 507 763 508 763 507 762 503 762 501 761 500 762 499 767 498 768 500 767 504 768 505 771 502 769 500 771 499 778 499 780 503 779 504 776 504 771 510 771 512 770 515 770 517 771 520 773 521 776 518 779 520 782 518 783 520 784 525 782 527 787 526 792 531 793 532 791 533 789 531 788 532 789 533 790 532 791 533 792 538 790 539 789 538 789 534 788 537 790 540 793 540 795 542 793 543 787 542 786 541 785 539 784 542 786 544 788 545 787 547 785 548 787 553 789 553 789 548 790 546 794 546 793 547 797 545 796 544 796 543 799 540 796 538 796 535 795 533 796 532 798 533 799 532 792 528 791 526 792 525 794 526 795 523 794 522 792 525 789 525 788 523 786 518 792 516 792 515 791 513 793 511 794 512 796 516 793 517 793 519 796 520 797 522 798 523 798 526 800 526 802 529 806 528 807 527 806 525 809 526 812 525 814 527 813 529 815 530 819 526 817 525 814 526 813 525 814 521 818 518 816 516 815 516 815 514 816 512 819 512 820 513 820 520 821 521 823 522 823 525 820 529 821 531 819 534 820 539 821 540 822 539 824 540 824 537 825 534 827 534 830 538 829 542 826 544 826 546 822 545 821 550 823 551 826 547 830 549 832 547 836 550 835 553 837 554 839 553 841 550 843 550 844 549 843 545 846 548 846 552 844 554 846 555 845 558 844 558 842 554 841 554 840 555 841 557 837 557 835 558 835 562 833 564 834 565 836 564 842 565 841 567 843 569 843 573 841 574 842 572 841 570 839 572 843 578 839 579 839 581 843 582 844 581 846 581 850 578 856 579 858 582 861 579 862 582 866 580 867 580 868 585 866 587 860 588 857 589 857 591 854 592 852 594 850 593 851 591 848 591 844 592 849 593 850 594 849 596 852 597 855 601 857 598 857 594 864 593 866 589 868 590 868 593 871 594 874 594 876 592 872 590 874 585 877 585 878 583 876 583 876 582 879 579 882 582 879 583 882 586 883 589 884 590 887 590 886 593 889 596 887 599 891 600 892 601 888 603 886 601 885 601 884 602 887 604 887 606 891 605 892 601 894 599 898 603 900 601 901 602 902 598 904 597 902 595 905 595 904 597 906 598 908 602 906 605 906 608 908 610 908 615 907 618 904 619 904 622 905 625 906 625 905 627 907 630 906 632 903 634 899 630 894 633 896 634 897 637 901 633 902 633 904 635 906 635 908 632 907 629 909 628 911 629 912 631 910 633 909 638 906 637 903 643 900 645 897 642 895 644 895 646 898 646 901 648 903 648 904 650 905 650 907 647 911 648 915 645 912 639 915 637 917 639 926 642 927 639 930 638 931 637 928 634 935 633 936 634 934 637 934 642 930 642 925 645 925 646 928 647 931 650 928 653 929 654 931 653 933 654 933 657 932 660 933 661 939 656 943 657 944 655 944 651 946 650 946 654 945 656 947 659 945 661 941 662 940 667 937 667 936 670 939 673 940 672 940 670 941 668 946 669 948 669 950 671 952 668 955 667 961 670 960 674 956 675 956 680 958 682 960 681 960 683 962 684 964 682 967 682 968 682 967 685 969 687 967 690 967 692 968 693 973 693 977 697 976 699 980 705 978 707 981 707 980 704 982 703 989 704 993 702 996 704 996 706 998 707 1003 704 1003 703 999 701 997 701 997 699 998 696 996 693 994 695 994 698 992 699 988 698 982 696 981 692 978 689 977 686 973 684 976 680 974 678 972 679 971 677 972 675 974 676 978 676 983 681 983 683 981 684 983 689 984 687 987 687 988 685 987 681 988 675 994 675 995 676 996 675 997 676 996 677 995 676 993 677 994 681 996 682 1000 683 1002 681 1004 681 1002 689 1003 692 1005 694 1004 697 1005 700 1005 701 1007 700 1010 702 1012 701 1012 699 1015 700 1016 700 1017 697 1017 694 1018 692 1026 690 1027 693 1026 694 1025 692 1024 692 1022 693 1022 696 1020 701 1017 702 1014 702 1012 704 1010 704 1010 707 1011 709 1007 711 1008 713 1010 713 1010 715 1009 717 1012 719 1010 722 1012 723 1014 721 1015 723 1006 725 1003 725 1002 723 1001 724 1002 725 1000 728 1003 728 1009 727 1012 729 1014 729 1016 732 1017 731 1019 729 1016 727 1018 725 1016 724 1016 722 1023 716 1023 713 1028 713 1029 714 1029 717 1030 716 1031 716 1029 714 1034 711 1034 709 1036 709 1036 713 1036 714 1033 715 1031 722 1032 723 1034 723 1036 725 1038 726 1040 725 1041 726 1040 728 1035 729 1033 732 1034 733 1037 730 1039 731 1038 734 1039 740 1037 743 1039 745 1037 747 1040 748 1040 754 1038 759 1028 759 1028 761 1032 763 1031 765 1031 766 1029 766 1027 769 1026 770 1024 768 1022 769 1022 772 1026 773 1030 776 1032 775 1035 775 1039 772 1041 775 1042 775 1042 772 1045 770 1045 769 1047 769 1049 771 1048 774 1046 775 1044 779 1040 780 1036 777 1035 777 1032 779 1034 781 1033 782 1034 782 1035 781 1039 780 1042 782 1042 784 1043 784 1045 781 1049 782 1051 780 1052 778 1054 778 1056 780 1055 781 1057 781 1059 783 1061 780 1063 781 1069 780 1069 783 1070 788 1069 791 1072 793 1076 792 1077 797 1075 799 1076 800 1079 803 1083 800 1086 800 1088 802 1085 802 1081 805 1078 803 1076 806 1076 808 1075 809 1071 808 1069 805 1068 807 1067 807 1066 805 1064 807 1064 804 1066 805 1070 803 1069 800 1064 799 1066 798 1069 798 1070 796 1068 795 1067 796 1065 795 1064 794 1066 791 1062 787 1061 787 1057 788 1054 792 1055 795 1051 796 1048 799 1050 801 1047 804 1047 807 1049 811 1050 812 1051 809 1053 810 1056 816 1053 818 1051 816 1052 814 1051 813 1049 814 1046 813 1047 822 1048 823 1052 822 1050 825 1052 828 1053 826 1052 823 1053 819 1053 818 1054 818 1056 820 1055 822 1057 823 1060 822 1060 826 1062 827 1063 827 1065 825 1064 823 1065 821 1060 816 1061 814 1057 814 1057 809 1060 807 1061 808 1061 812 1062 812 1064 808 1067 807 1070 808 1071 809 1070 811 1067 810 1064 811 1065 815 1067 813 1068 813 1069 816 1071 818 1074 828 1077 828 1080 832 1082 831 1081 833 1083 837 1085 835 1083 831 1085 829 1083 828 1081 828 1080 827 1083 826 1086 826 1089 828 1091 828 1093 826 1093 822 1094 820 1100 818 1104 822 1106 826 1106 828 1105 830 1105 831 1109 831 1111 830 1113 831 1116 830 1115 832 1112 832 1111 834 1108 834 1105 836 1104 836 1103 834 1098 834 1098 838 1100 844 1102 844 1104 846 1105 845 1104 843 1105 841 1108 841 1110 843 1112 847 1110 848 1109 850 1115 850 1114 848 1120 845 1120 842 1119 840 1120 839 1122 841 1124 841 1126 842 1122 844 1126 852 1127 851 1126 849 1129 847 1131 850 1139 851 1141 853 1140 855 1142 858 1144 859 1146 861 1145 862 1144 860 1142 861 1142 864 1139 865 1139 866 1144 866 1143 870 1139 876 1136 874 1135 875 1136 877 1138 876 1138 878 1133 885 1131 883 1131 884 1132 886 1129 890 1126 890 1124 896 1121 897 1116 901 1110 902 1106 906 1102 907 1095 913 1091 915 1088 915 1086 917 1081 919 1077 919 1073 922 1070 923 1066 925 1063 924 1051 930 1045 931 1043 933 1041 933 1039 934 1036 934 1031 936 1027 936 1026 937 1022 937 1021 938 1011 939 1010 940 996 941 995 942 985 942 984 943 M777 455 775 455 774 455 774 452 780 452 780 453 777 455 M781 452 780 452 781 452 781 452 M744 457 743 453 745 454 744 457 M799 455 797 456 796 454 796 453 798 453 799 454 799 455 M802 458 801 458 801 457 803 457 802 458 M692 460 692 460 M724 462 726 461 724 459 723 461 724 462 M702 465 699 464 697 461 697 460 702 460 702 465 M735 469 734 468 735 464 736 468 735 469 M688 467 688 467 688 467 M696 467 695 467 696 467 M771 471 768 469 771 467 771 471 M721 469 720 468 719 469 720 470 721 469 M730 470 729 469 730 469 730 470 M719 473 720 472 719 471 716 471 716 472 719 473 M728 490 728 483 724 481 724 475 722 475 720 474 718 476 721 478 720 483 725 485 726 487 725 490 728 490 M734 477 733 477 734 477 M732 480 732 479 731 478 729 478 728 479 729 480 732 480 M748 480 747 479 747 477 750 478 750 479 748 480 M740 480 740 480 M744 482 744 480 744 482 M750 486 749 485 750 483 751 484 750 486 M772 485 770 485 770 483 772 483 772 485 M760 486 759 487 759 485 760 485 760 486 M704 490 705 487 704 486 702 487 702 488 704 490 M716 493 716 488 715 488 715 491 716 493 M738 493 737 489 735 491 733 490 731 491 737 494 738 493 M758 492 756 489 759 489 758 492 M798 489 797 489 798 489 M787 492 786 491 787 491 787 492 M780 493 780 493 M724 497 724 495 721 494 718 496 719 498 724 497 M736 498 736 497 736 495 734 497 736 498 M739 499 739 498 738 498 738 499 739 499 M720 501 720 500 719 498 717 500 718 501 720 501 M761 500 760 499 761 499 762 499 761 500 M732 501 730 501 732 501 M734 504 737 502 735 501 733 501 733 502 734 504 M805 520 803 521 800 519 797 520 797 517 801 517 802 516 801 515 800 515 799 513 797 512 797 509 800 509 800 506 803 508 802 510 805 511 804 513 805 515 803 518 805 520 M790 513 786 510 786 508 790 509 791 512 790 513 M769 514 768 513 765 512 765 510 763 508 762 511 763 514 768 515 769 514 M757 517 759 515 758 514 754 513 753 515 755 516 756 517 757 517 M753 517 752 516 752 517 753 517 M811 520 810 520 810 518 812 519 811 520 M769 524 769 522 767 522 768 524 769 524 M766 526 766 525 766 526 766 527 766 526 M776 529 775 527 772 529 773 530 776 529 M814 534 814 533 813 533 813 535 814 534 M850 533 849 534 849 533 850 533 M802 536 802 536 M848 538 847 537 848 536 849 537 848 538 M775 538 776 537 774 537 774 538 775 538 M808 540 808 538 804 540 806 541 808 540 M850 539 849 539 850 539 850 539 M845 542 846 539 847 541 845 542 M831 545 830 544 830 542 832 544 831 545 M838 544 837 543 838 543 838 544 M804 545 803 544 803 545 804 545 M818 554 818 551 820 549 819 547 816 548 815 544 814 543 811 544 811 545 814 547 811 553 815 555 818 554 M837 544 837 544 M848 544 848 544 M808 546 809 545 807 544 805 546 807 547 808 546 M833 547 833 546 833 547 M854 549 853 549 853 548 854 548 854 549 M810 550 810 549 808 549 810 550 M830 556 830 554 829 554 827 551 826 551 824 556 828 554 829 556 830 556 M848 553 847 553 848 553 M821 554 820 554 821 554 M876 555 875 556 875 555 875 554 876 555 M834 557 835 556 834 555 832 556 833 558 834 557 M863 558 863 557 863 558 M869 559 869 558 870 558 869 559 M833 561 833 558 829 561 831 562 833 561 M845 561 844 560 844 559 846 560 845 561 M854 562 851 561 852 559 854 561 854 562 M846 567 845 567 843 565 843 564 845 562 848 565 846 567 M860 574 854 574 855 570 859 568 863 571 868 569 868 570 868 572 867 573 865 571 863 571 860 574 M896 574 895 574 894 569 896 569 895 571 897 573 896 574 M835 572 835 572 M830 574 830 572 829 573 829 574 830 574 M879 578 876 576 877 573 879 573 878 575 879 578 M893 575 893 575 893 575 M848 578 845 577 846 576 849 577 848 578 M871 576 870 576 871 575 871 576 M871 585 870 584 872 582 870 580 872 578 873 579 873 581 871 585 M843 579 843 579 M911 585 908 583 909 582 913 582 913 583 911 585 M917 584 916 584 916 583 917 583 917 584 M902 585 901 584 902 584 902 585 M910 588 909 587 910 585 911 586 911 587 910 588 M855 589 856 588 855 588 854 589 855 589 M912 590 912 590 M911 595 909 595 908 590 911 593 911 595 M882 596 883 595 880 594 880 596 881 597 882 596 M886 595 885 594 883 595 885 596 886 595 M872 598 871 597 870 597 871 598 872 598 M923 606 919 606 917 603 915 604 914 602 916 599 919 598 923 599 923 602 921 600 920 600 920 601 921 603 923 603 923 606 M879 603 881 602 877 600 877 599 876 600 876 603 878 604 879 603 M926 599 926 599 M901 611 903 609 905 605 904 604 901 603 899 606 898 610 899 611 901 611 M869 606 870 605 869 604 868 605 869 606 M887 614 888 612 887 609 886 608 884 609 883 606 878 604 875 606 875 608 876 609 883 608 885 611 888 612 886 614 887 614 M915 609 913 609 913 607 914 605 915 605 916 607 915 609 M910 607 909 607 910 607 M863 609 863 609 M894 615 895 614 892 614 894 615 M886 616 885 615 883 616 885 617 886 616 M918 621 915 620 915 617 917 615 919 617 916 619 918 620 918 621 M893 625 894 623 896 621 897 619 894 617 893 620 892 621 891 619 890 619 888 622 890 625 893 625 M929 624 927 625 926 623 929 623 929 624 M927 633 926 633 925 631 927 627 928 630 927 633 M919 633 919 633 M965 639 965 638 966 638 965 639 M923 644 922 644 922 645 923 644 M950 648 947 646 947 645 949 644 950 645 951 647 950 648 M887 646 886 646 887 646 M973 651 969 651 966 648 968 646 972 648 973 651 M923 648 921 648 922 649 923 648 M965 649 964 649 964 648 966 648 965 649 M882 650 882 651 882 650 M897 651 897 650 896 651 897 652 897 651 M964 672 963 670 964 667 963 664 962 663 960 665 958 665 959 660 955 655 954 655 954 651 958 650 960 651 960 654 961 657 961 659 962 660 964 659 963 658 964 656 966 657 967 658 965 660 968 662 964 667 966 670 964 672 M913 652 913 652 M907 654 907 653 906 653 906 654 907 654 M912 659 913 658 914 655 912 653 910 655 909 657 910 659 912 659 M993 655 993 655 M897 659 897 659 M948 665 946 663 949 662 949 663 948 665 M900 671 898 669 900 667 895 663 894 664 893 670 895 671 898 669 899 671 900 671 M921 666 922 665 921 665 921 666 M904 668 903 667 902 668 904 668 M951 667 950 667 951 667 951 667 M979 669 978 670 978 669 979 669 M987 672 983 672 983 669 985 668 987 671 987 672 M964 676 961 673 966 672 967 670 968 672 964 676 M953 672 953 672 M953 676 953 675 953 677 953 676 M941 682 941 677 939 677 938 678 938 681 940 682 941 682 M951 679 950 678 949 679 951 679 M954 682 953 678 952 679 952 681 954 682 M944 688 946 686 945 685 944 686 944 688 M975 689 974 690 974 689 974 688 975 689 M986 689 986 689 M991 693 993 691 996 693 998 692 991 690 990 691 990 694 991 693 M976 694 977 693 976 694 M1001 696 1002 695 1002 694 1000 693 999 694 1001 696 M935 694 934 694 934 695 935 694 M947 694 946 694 947 694 M926 695 924 695 925 696 926 695 M1031 699 1028 699 1028 697 1029 696 1032 695 1033 696 1031 699 M972 700 971 699 971 700 972 700 M976 706 977 703 976 702 976 705 976 706 M948 703 948 702 948 703 M1017 706 1017 706 M964 715 964 712 966 710 965 709 963 709 959 712 962 715 964 715 M1018 716 1014 711 1012 713 1011 712 1011 711 1013 710 1015 711 1018 709 1019 715 1018 716 M995 717 995 714 993 711 989 711 989 713 991 714 991 718 993 718 995 717 M984 715 981 713 981 714 984 715 M998 716 1000 715 999 714 996 715 998 716 M967 719 968 718 967 718 966 719 967 719 M970 718 970 718 M990 720 990 720 M1031 728 1030 727 1028 728 1027 726 1029 723 1028 722 1024 719 1023 720 1021 724 1022 726 1026 729 1031 728 M1041 724 1040 723 1040 722 1041 723 1041 724 M978 734 980 732 979 730 977 731 976 734 977 735 978 734 M1051 734 1050 734 1050 733 1051 733 1051 734 M1037 737 1036 735 1034 734 1034 736 1035 737 1037 737 M1053 737 1053 737 M964 746 966 744 965 741 961 738 959 740 960 741 964 746 M1013 740 1012 740 1013 740 M987 749 988 746 990 745 990 744 986 741 985 740 984 743 981 745 980 745 977 743 977 747 979 749 982 749 984 747 987 749 M1044 748 1042 748 1039 744 1041 743 1042 743 1044 748 M1032 747 1035 746 1033 744 1030 746 1031 747 1032 747 M1046 746 1046 746 M1028 747 1027 746 1027 747 1028 747 M1045 749 1045 749 M1020 753 1021 752 1020 751 1018 752 1018 753 1020 753 M1048 765 1046 764 1044 765 1043 764 1044 765 1041 766 1040 762 1041 759 1045 756 1047 756 1049 759 1051 758 1049 756 1049 752 1051 752 1055 755 1056 757 1055 758 1061 761 1060 762 1057 763 1057 765 1055 763 1051 765 1048 765 M995 754 995 753 995 754 M1011 754 1011 753 1008 754 1010 755 1011 754 M1032 758 1031 756 1030 757 1030 759 1032 758 M1036 763 1033 763 1036 762 1036 763 M1053 769 1052 769 1051 768 1053 766 1054 767 1053 769 M1003 768 1002 768 1003 768 M1035 770 1034 769 1035 768 1036 769 1035 770 M1066 775 1063 772 1061 772 1065 768 1067 772 1067 774 1066 775 M1031 773 1029 773 1031 772 1033 772 1031 773 M1018 774 1018 773 1018 774 M1027 776 1026 776 1027 776 M1048 778 1048 777 1049 778 1048 778 M1055 777 1056 777 1055 777 M1080 779 1079 779 1079 778 1080 776 1080 779 M1028 780 1027 780 1028 780 M1085 787 1083 785 1084 783 1085 782 1090 785 1085 787 M1040 786 1041 784 1038 783 1038 785 1040 786 M1050 785 1049 784 1049 785 1050 785 M1046 787 1045 785 1045 787 1046 787 M1042 790 1043 788 1041 789 1041 790 1042 790 M1039 790 1038 790 1039 791 1039 790 M1083 798 1082 798 1083 797 1083 798 M1059 803 1056 802 1056 799 1058 798 1059 799 1060 801 1059 803 M1054 801 1053 799 1054 800 1054 801 M1087 821 1083 821 1081 819 1081 813 1080 811 1081 809 1086 813 1083 815 1083 816 1084 817 1087 818 1087 821 M1042 812 1042 811 1041 811 1041 813 1042 812 M1134 811 1134 810 1134 811 M1040 815 1040 815 M1074 823 1072 821 1076 819 1079 820 1079 821 1076 821 1074 823 M1110 821 1109 821 1109 820 1111 820 1110 821 M1130 824 1130 823 1131 824 1130 824 M1048 825 1048 825 M1045 830 1044 828 1042 828 1043 830 1044 831 1045 830 M1119 830 1118 830 1117 829 1118 828 1119 828 1119 830 M1040 833 1041 829 1040 828 1039 828 1039 831 1040 833 M1051 832 1051 829 1050 829 1049 832 1050 833 1051 832 M1149 835 1148 835 1147 833 1149 831 1150 832 1149 835 M1067 832 1066 832 1067 832 M1133 835 1131 836 1130 834 1133 833 1134 834 1133 835 M1150 843 1145 842 1144 838 1148 836 1150 838 1151 836 1152 835 1155 835 1154 840 1153 841 1151 841 1150 843 M1061 838 1061 838 1061 838 M1101 841 1100 838 1101 837 1105 839 1101 841 M1066 843 1066 842 1065 841 1064 840 1063 841 1063 842 1066 843 M1129 846 1127 845 1127 844 1130 843 1130 846 1129 846 M1136 847 1134 847 1135 846 1136 847 M1150 848 1150 848 M1068 858 1069 856 1077 855 1079 850 1076 849 1074 851 1071 850 1070 852 1067 853 1064 855 1064 856 1068 858 M1107 850 1106 850 1107 850 M1151 850 1151 850 M1095 853 1094 852 1092 853 1093 854 1095 853 M1110 854 1110 852 1109 852 1107 854 1109 855 1110 854 M1147 856 1145 856 1150 851 1150 853 1147 856 M1143 855 1142 854 1143 853 1143 855 M1103 859 1105 855 1104 854 1103 854 1102 856 1102 859 1103 859 M1110 857 1110 856 1110 857 M1135 859 1138 857 1134 856 1133 858 1134 859 1135 859 M1083 866 1082 866 1083 866 M1090 867 1088 866 1090 867 M1116 866 1115 865 1114 866 1116 866 M1137 872 1137 872 M1129 876 1128 875 1129 876"/>
<rect x="0.5" y="257.5" width="1919" height="732" fill="none" stroke="#00ffff"/>
<line x1="35.5" y1="257" x2="35.5" y2="990" stroke="#00ffff"/>
<line x1="236.5" y1="257" x2="236.5" y2="990" stroke="#00ffff"/>
<line x1="437.5" y1="257" x2="437.5" y2="990" stroke="#00ffff"/>
<line x1="638.5" y1="257" x2="638.5" y2="990" stroke="#00ffff"/>
<line x1="839.5" y1="257" x2="839.5" y2="990" stroke="#00ffff"/>
<line x1="1040.5" y1="257" x2="1040.5" y2="990" stroke="#00ffff"/>
<line x1="1241.5" y1="257" x2="1241.5" y2="990" stroke="#00ffff"/>
<line x1="1442.5" y1="257" x2="1442.5" y2="990" stroke="#00ffff"/>
<line x1="1643.5" y1="257" x2="1643.5" y2="990" stroke="#00ffff"/>
<line x1="1844.5" y1="257" x2="1844.5" y2="990" stroke="#00ffff"/>
<line x1="0" y1="945.5" x2="1920" y2="945.5" stroke="#00ffff"/>
<line x1="0" y1="865.5" x2="1920" y2="865.5" stroke="#00ffff"/>
<line x1="0" y1="784.5" x2="1920" y2="784.5" stroke="#00ffff"/>
<line x1="0" y1="704.5" x2="1920" y2="704.5" stroke="#00ffff"/>
<line x1="0" y1="623.5" x2="1920" y2="623.5" stroke="#00ffff"/>
<line x1="0" y1="543.5" x2="1920" y2="543.5" stroke="#00ffff"/>
<line x1="0" y1="463.5" x2="1920" y2="463.5" stroke="#00ffff"/>
<line x1="0" y1="382.5" x2="1920" y2="382.5" stroke="#00ffff"/>
<line x1="0" y1="302.5" x2="1920" y2="302.5" stroke="#00ffff"/>
<line x1="35.5" y1="940.0" x2="35.5" y2="945.0" stroke="#00ffff"/>
<line x1="75.5" y1="940.0" x2="75.5" y2="945.0" stroke="#00ffff"/>
<line x1="116.5" y1="940.0" x2="116.5" y2="945.0" stroke="#00ffff"/>
<line x1="156.5" y1="940.0" x2="156.5" y2="945.0" stroke="#00ffff"/>
<line x1="196.5" y1="940.0" x2="196.5" y2="945.0" stroke="#00ffff"/>
<line x1="236.5" y1="940.0" x2="236.5" y2="945.0" stroke="#00ffff"/>
<line x1="276.5" y1="940.0" x2="276.5" y2="945.0" stroke="#00ffff"/>
<line x1="316.5" y1="940.0" x2="316.5" y2="945.0" stroke="#00ffff"/>
<line x1="357.5" y1="940.0" x2="357.5" y2="945.0" stroke="#00ffff"/>
<line x1="397.5" y1="940.0" x2="397.5" y2="945.0" stroke="#00ffff"/>
<line x1="437.5" y1="940.0" x2="437.5" y2="945.0" stroke="#00ffff"/>
<line x1="477.5" y1="940.0" x2="477.5" y2="945.0" stroke="#00ffff"/>
<line x1="517.5" y1="940.0" x2="517.5" y2="945.0" stroke="#00ffff"/>
<line x1="558.5" y1="940.0" x2="558.5" y2="945.0" stroke="#00ffff"/>
<line x1="598.5" y1="940.0" x2="598.5" y2="945.0" stroke="#00ffff"/>
<line x1="638.5" y1="940.0" x2="638.5" y2="945.0" stroke="#00ffff"/>
<line x1="678.5" y1="940.0" x2="678.5" y2="945.0" stroke="#00ffff"/>
<line x1="718.5" y1="940.0" x2="718.5" y2="945.0" stroke="#00ffff"/>
<line x1="759.5" y1="940.0" x2="759.5" y2="945.0" stroke="#00ffff"/>
<line x1="799.5" y1="940.0" x2="799.5" y2="945.0" stroke="#00ffff"/>
<line x1="839.5" y1="940.0" x2="839.5" y2="945.0" stroke="#00ffff"/>
<line x1="879.5" y1="940.0" x2="879.5" y2="945.0" stroke="#00ffff"/>
<line x1="919.5" y1="940.0" x2="919.5" y2="945.0" stroke="#00ffff"/>
<line x1="960.5" y1="940.0" x2="960.5" y2="945.0" stroke="#00ffff"/>
<line x1="1000.5" y1="940.0" x2="1000.5" y2="945.0" stroke="#00ffff"/>
<line x1="1040.5" y1="940.0" x2="1040.5" y2="945.0" stroke="#00ffff"/>
<line x1="1080.5" y1="940.0" x2="1080.5" y2="945.0" stroke="#00ffff"/>
<line x1="1120.5" y1="940.0" x2="1120.5" y2="945.0" stroke="#00ffff"/>
<line x1="1160.5" y1="940.0" x2="1160.5" y2="945.0" stroke="#00ffff"/>
<line x1="1201.5" y1="940.0" x2="1201.5" y2="945.0" stroke="#00ffff"/>
<line x1="1241.5" y1="940.0" x2="1241.5" y2="945.0" stroke="#00ffff"/>
<line x1="1281.5" y1="940.0" x2="1281.5" y2="945.0" stroke="#00ffff"/>
<line x1="1321.5" y1="940.0" x2="1321.5" y2="945.0" stroke="#00ffff"/>
<line x1="1361.5" y1="940.0" x2="1361.5" y2="945.0" stroke="#00ffff"/>
<line x1="1402.5" y1="940.0" x2="1402.5" y2="945.0" stroke="#00ffff"/>
<line x1="1442.5" y1="940.0" x2="1442.5" y2="945.0" stroke="#00ffff"/>
<line x1="1482.5" y1="940.0" x2="1482.5" y2="945.0" stroke="#00ffff"/>
<line x1="1522.5" y1="940.0" x2="1522.5" y2="945.0" stroke="#00ffff"/>
<line x1="1562.5" y1="940.0" x2="1562.5" y2="945.0" stroke="#00ffff"/>
<line x1="1603.5" y1="940.0" x2="1603.5" y2="945.0" stroke="#00ffff"/>
<line x1="1643.5" y1="940.0" x2="1643.5" y2="945.0" stroke="#00ffff"/>
<line x1="1683.5" y1="940.0" x2="1683.5" y2="945.0" stroke="#00ffff"/>
<line x1="1723.5" y1="940.0" x2="1723.5" y2="945.0" stroke="#00ffff"/>
<line x1="1763.5" y1="940.0" x2="1763.5" y2="945.0" stroke="#00ffff"/>
<line x1="1803.5" y1="940.0" x2="1803.5" y2="945.0" stroke="#00ffff"/>
<line x1="1844.5" y1="940.0" x2="1844.5" y2="945.0" stroke="#00ffff"/>
<line x1="1884.5" y1="940.0" x2="1884.5" y2="945.0" stroke="#00ffff"/>
<line x1="633" y1="985.5" x2="639" y2="985.5" stroke="#00ffff"/>
<line x1="633" y1="965.5" x2="639" y2="965.5" stroke="#00ffff"/>
<line x1="633" y1="945.5" x2="639" y2="945.5" stroke="#00ffff"/>
<line x1="633" y1="925.5" x2="639" y2="925.5" stroke="#00ffff"/>
<line x1="633" y1="905.5" x2="639" y2="905.5" stroke="#00ffff"/>
<line x1="633" y1="885.5" x2="639" y2="885.5" stroke="#00ffff"/>
<line x1="633" y1="865.5" x2="639" y2="865.5" stroke="#00ffff"/>
<line x1="633" y1="845.5" x2="639" y2="845.5" stroke="#00ffff"/>
<line x1="633" y1="824.5" x2="639" y2="824.5" stroke="#00ffff"/>
<line x1="633" y1="804.5" x2="639" y2="804.5" stroke="#00ffff"/>
<line x1="633" y1="784.5" x2="639" y2="784.5" stroke="#00ffff"/>
<line x1="633" y1="764.5" x2="639" y2="764.5" stroke="#00ffff"/>
<line x1="633" y1="744.5" x2="639" y2="744.5" stroke="#00ffff"/>
<line x1="633" y1="724.5" x2="639" y2="724.5" stroke="#00ffff"/>
<line x1="633" y1="704.5" x2="639" y2="704.5" stroke="#00ffff"/>
<line x1="633" y1="684.5" x2="639" y2="684.5" stroke="#00ffff"/>
<line x1="633" y1="664.5" x2="639" y2="664.5" stroke="#00ffff"/>
<line x1="633" y1="644.5" x2="639" y2="644.5" stroke="#00ffff"/>
<line x1="633" y1="623.5" x2="639" y2="623.5" stroke="#00ffff"/>
<line x1="633" y1="603.5" x2="639" y2="603.5" stroke="#00ffff"/>
<line x1="633" y1="583.5" x2="639" y2="583.5" stroke="#00ffff"/>
<line x1="633" y1="563.5" x2="639" y2="563.5" stroke="#00ffff"/>
<line x1="633" y1="543.5" x2="639" y2="543.5" stroke="#00ffff"/>
<line x1="633" y1="523.5" x2="639" y2="523.5" stroke="#00ffff"/>
<line x1="633" y1="503.5" x2="639" y2="503.5" stroke="#00ffff"/>
<line x1="633" y1="483.5" x2="639" y2="483.5" stroke="#00ffff"/>
<line x1="633" y1="463.5" x2="639" y2="463.5" stroke="#00ffff"/>
<line x1="633" y1="443.5" x2="639" y2="443.5" stroke="#00ffff"/>
<line x1="633" y1="423.5" x2="639" y2="423.5" stroke="#00ffff"/>
<line x1="633" y1="402.5" x2="639" y2="402.5" stroke="#00ffff"/>
<line x1="633" y1="382.5" x2="639" y2="382.5" stroke="#00ffff"/>
<line x1="633" y1="362.5" x2="639" y2="362.5" stroke="#00ffff"/>
<line x1="633" y1="342.5" x2="639" y2="342.5" stroke="#00ffff"/>
<line x1="633" y1="322.5" x2="639" y2="322.5" stroke="#00ffff"/>
<line x1="633" y1="302.5" x2="639" y2="302.5" stroke="#00ffff"/>
<line x1="633" y1="282.5" x2="639" y2="282.5" stroke="#00ffff"/>
<line x1="633" y1="262.5" x2="639" y2="262.5" stroke="#00ffff"/>
<svg x="1652" y="58" width="127" height="127"><use href="#pbody" transform="translate(0,0) scale(0.198) translate(-639,-303)"/></svg>
<g stroke="#00ffff" stroke-width="1.3" fill="#00ffff" shape-rendering="geometricPrecision"><path d="M1715.5 121.5 V93 M1715.5 121.5 H1745" fill="none"/><path d="M1715.5 91 L1713 97 L1718 97 Z" stroke="none"/><path d="M1746.5 121.5 L1740 119 L1740 124 Z" stroke="none"/></g>
<text x="1714" y="87" fill="#00ffff" font-family="Liberation Sans" font-size="12" text-anchor="middle">Y</text>
<text x="1754.5" y="127" fill="#00ffff" font-family="Liberation Sans" font-size="12" text-anchor="middle">X</text>
</svg>
<div class="ax" style="left:4.2px;top:911.5px;width:60px;text-align:center">-1500</div>
<div class="ax" style="left:205.1px;top:911.5px;width:60px;text-align:center">-1000</div>
<div class="ax" style="left:406.1px;top:911.5px;width:60px;text-align:center">-500</div>
<div class="a" style="left:600px;top:911.5px;width:39px;height:14px;overflow:hidden"><div class="ax" style="left:7.5px;top:0;width:60px;text-align:center">0</div></div>
<div class="ax" style="left:807.9px;top:911.5px;width:60px;text-align:center">500</div>
<div class="ax" style="left:1008.9px;top:911.5px;width:60px;text-align:center">1000</div>
<div class="ax" style="left:1209.8px;top:911.5px;width:60px;text-align:center">1500</div>
<div class="ax" style="left:1410.8px;top:911.5px;width:60px;text-align:center">2000</div>
<div class="ax" style="left:1611.7px;top:911.5px;width:60px;text-align:center">2500</div>
<div class="ax" style="left:1812.6px;top:911.5px;width:60px;text-align:center">3000</div>
<div class="ax" style="left:581px;top:939.0px;width:60px;text-align:center;transform:rotate(-90deg)">0</div>
<div class="ax" style="left:581px;top:858.6px;width:60px;text-align:center;transform:rotate(-90deg)">200</div>
<div class="ax" style="left:581px;top:778.2px;width:60px;text-align:center;transform:rotate(-90deg)">400</div>
<div class="ax" style="left:581px;top:697.9px;width:60px;text-align:center;transform:rotate(-90deg)">600</div>
<div class="ax" style="left:581px;top:617.5px;width:60px;text-align:center;transform:rotate(-90deg)">800</div>
<div class="ax" style="left:581px;top:537.1px;width:60px;text-align:center;transform:rotate(-90deg)">1000</div>
<div class="ax" style="left:581px;top:456.7px;width:60px;text-align:center;transform:rotate(-90deg)">1200</div>
<div class="ax" style="left:581px;top:376.4px;width:60px;text-align:center;transform:rotate(-90deg)">1400</div>
<div class="ax" style="left:581px;top:296.0px;width:60px;text-align:center;transform:rotate(-90deg)">1600</div>
<div class="a" style="left:0;top:994px;width:1920px;height:20px;border:1px solid #000;background:linear-gradient(to right,#000 0%,#800000 25%,#ff8000 50%,#ffff80 75%,#fff 100%)"></div>
<div class="a" style="left:192px;top:1013px;width:1px;height:3px;background:#000"></div>
<div class="cb" style="left:162px;top:1025px;width:60px;text-align:center">17</div>
<div class="a" style="left:384px;top:1013px;width:1px;height:3px;background:#000"></div>
<div class="cb" style="left:354px;top:1025px;width:60px;text-align:center">34</div>
<div class="a" style="left:576px;top:1013px;width:1px;height:3px;background:#000"></div>
<div class="cb" style="left:546px;top:1025px;width:60px;text-align:center">52</div>
<div class="a" style="left:768px;top:1013px;width:1px;height:3px;background:#000"></div>
<div class="cb" style="left:738px;top:1025px;width:60px;text-align:center">69</div>
<div class="a" style="left:960px;top:1013px;width:1px;height:3px;background:#000"></div>
<div class="cb" style="left:930px;top:1025px;width:60px;text-align:center">86</div>
<div class="a" style="left:1152px;top:1013px;width:1px;height:3px;background:#000"></div>
<div class="cb" style="left:1122px;top:1025px;width:60px;text-align:center">103</div>
<div class="a" style="left:1344px;top:1013px;width:1px;height:3px;background:#000"></div>
<div class="cb" style="left:1314px;top:1025px;width:60px;text-align:center">120</div>
<div class="a" style="left:1536px;top:1013px;width:1px;height:3px;background:#000"></div>
<div class="cb" style="left:1506px;top:1025px;width:60px;text-align:center">138</div>
<div class="a" style="left:1728px;top:1013px;width:1px;height:3px;background:#000"></div>
<div class="cb" style="left:1698px;top:1025px;width:60px;text-align:center">155</div>
</body></html>
